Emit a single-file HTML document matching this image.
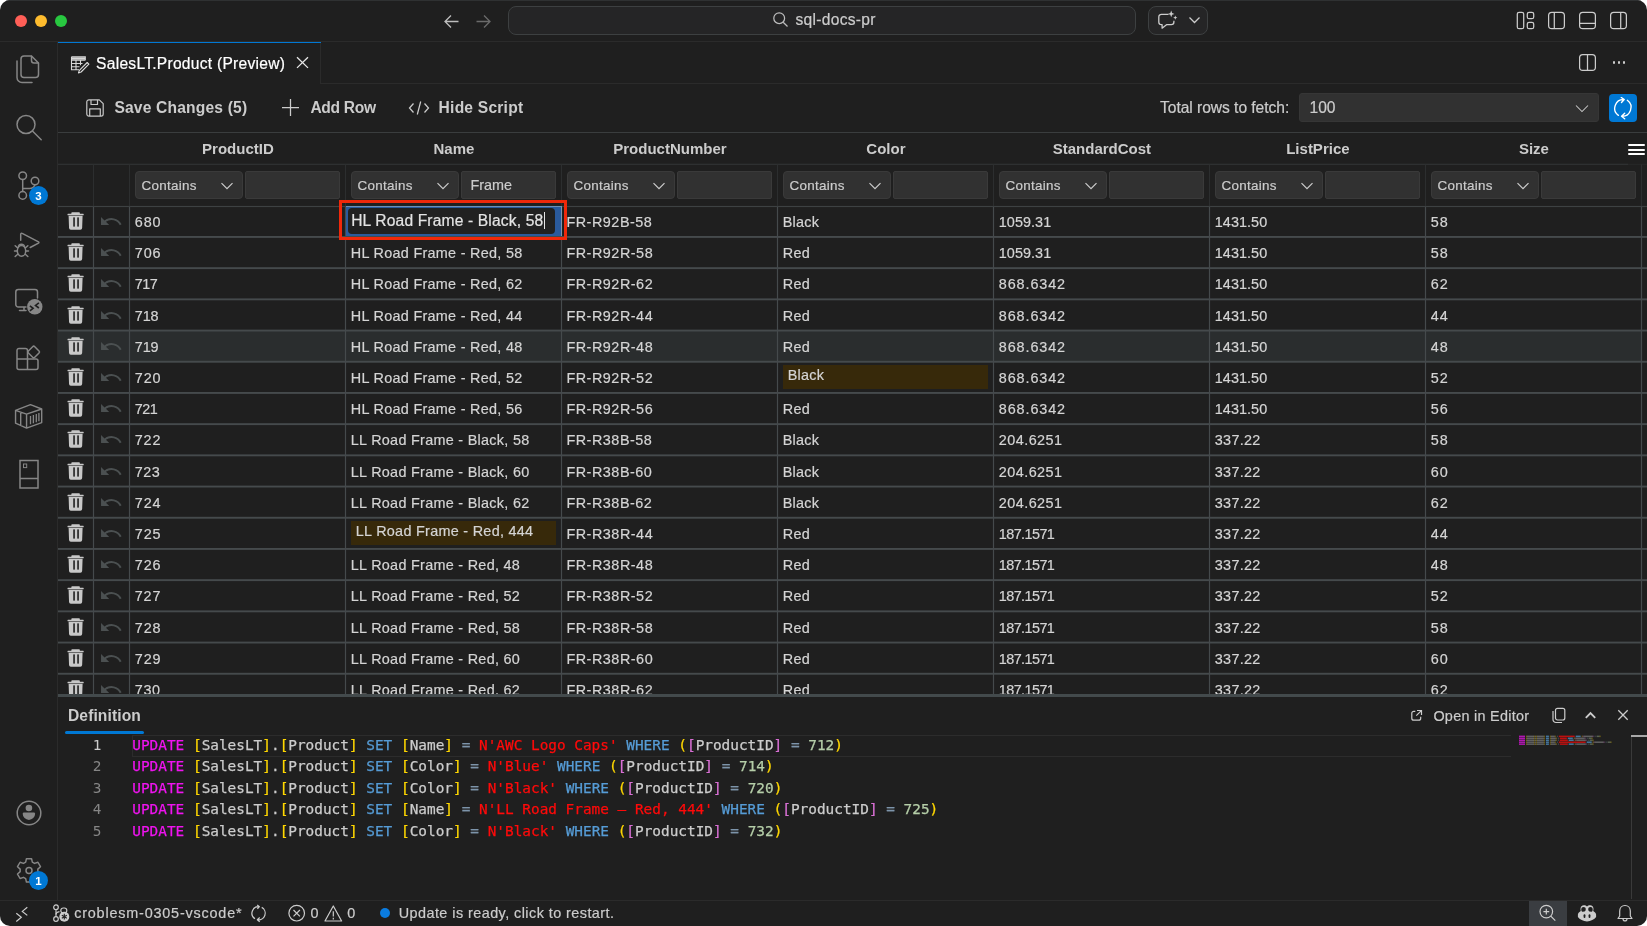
<!DOCTYPE html>
<html lang="en"><head><meta charset="utf-8"><title>SalesLT.Product (Preview) - sql-docs-pr</title>
<style>
html,body{margin:0;padding:0;background:#fff;}
body{width:1647px;height:926px;overflow:hidden;position:relative;}
#win{will-change:transform;position:absolute;left:0;top:0;width:1647px;height:926px;background:#1f1f1f;border-radius:10px;overflow:hidden;}
.b{position:absolute;display:block;box-sizing:border-box;}
.t{position:absolute;white-space:pre;display:block;}
</style></head><body><div id="win">
<div class="b" style="left:0px;top:0px;width:1647px;height:1px;background:#2f3132;"></div>
<div class="b" style="left:0px;top:41px;width:1647px;height:1px;background:#2b2b2b;"></div>
<div class="b" style="left:57px;top:42px;width:1px;height:858px;background:#2b2b2b;"></div>
<div class="b" style="left:0px;top:900px;width:1647px;height:1px;background:#2b2b2b;"></div>
<div class="b" style="left:320px;top:83px;width:1327px;height:1px;background:#2b2b2b;"></div>
<div class="b" style="left:58px;top:42px;width:263px;height:1px;background:#0078d4;"></div>
<div class="b" style="left:320px;top:43px;width:1px;height:41px;background:#2b2b2b;"></div>
<div class="b" style="left:15px;top:15px;width:12px;height:12px;background:#ff5f57;border-radius:50%;"></div>
<div class="b" style="left:35px;top:15px;width:12px;height:12px;background:#febc2e;border-radius:50%;"></div>
<div class="b" style="left:55px;top:15px;width:12px;height:12px;background:#28c840;border-radius:50%;"></div>
<svg class="b" style="left:443px;top:13px;" width="17" height="17" viewBox="0 0 17 17" fill="none"><path d="M15.5 8.5H2.2M8 2.5L2 8.5l6 6" stroke="#bdbdbd" stroke-width="1.3"/></svg>
<svg class="b" style="left:475px;top:13px;" width="17" height="17" viewBox="0 0 17 17" fill="none"><path d="M1.5 8.5h13.3M9 2.5l6 6-6 6" stroke="#6b6b6b" stroke-width="1.3"/></svg>
<div class="b" style="left:508px;top:6px;width:628px;height:29px;background:#252526;border:1px solid #3d4041;border-radius:8px;"></div>
<svg class="b" style="left:772px;top:11px;" width="17" height="17" viewBox="0 0 17 17" fill="none"><circle cx="7.2" cy="7.2" r="5.4" stroke="#bdbdbd" stroke-width="1.25"/><path d="M11.2 11.2l4.3 4.3" stroke="#bdbdbd" stroke-width="1.25"/></svg>
<span class="t" style="left:795.4px;top:12.00px;font:400 15.6px/1 'Liberation Sans', sans-serif;color:#ccc;letter-spacing:0.3px;-webkit-text-stroke:0.2px;">sql-docs-pr</span>
<div class="b" style="left:1148px;top:6px;width:60px;height:29px;background:#252526;border:1px solid #3d4041;border-radius:8px;"></div>
<svg class="b" style="left:1156px;top:9px;" width="23" height="22" viewBox="0 0 23 22" fill="none"><path d="M12.500 5.300H5.400a2.600 2.600 0 0 0-2.600 2.600v5.200a2.600 2.600 0 0 0 2.600 2.600h.7v3.500l4.400-3.500h4.800a2.600 2.600 0 0 0 2.600-2.600v-1.300" stroke="#ccc" stroke-width="1.300" stroke-linejoin="round"/><path d="M15.200 1.600l.9 2.400 2.400.9-2.400.9-.9 2.400-.9-2.400-2.400-.9 2.400-.9z" fill="#ccc"/><path d="M19.300 6.600l.6 1.500 1.500.6-1.500.6-.6 1.500-.6-1.500-1.500-.6 1.500-.6z" fill="#ccc"/></svg>
<svg class="b" style="left:1188px;top:15px;" width="13" height="10" viewBox="0 0 13 10" fill="none"><path d="M1.5 2.5l5 5 5-5" stroke="#ccc" stroke-width="1.25"/></svg>
<svg class="b" style="left:1516px;top:11px;" width="19" height="19" viewBox="0 0 19 19" fill="none"><rect x="1.3" y="1.3" width="6.4" height="16.4" rx="1.8" stroke="#ccc" stroke-width="1.25"/><rect x="11.3" y="1.3" width="6.4" height="6.4" rx="1.8" stroke="#ccc" stroke-width="1.25"/><rect x="11.3" y="11.3" width="6.4" height="6.4" rx="1.8" stroke="#ccc" stroke-width="1.25"/></svg>
<svg class="b" style="left:1547px;top:11px;" width="19" height="19" viewBox="0 0 19 19" fill="none"><rect x="1.6" y="1.3" width="15.8" height="16.4" rx="3.2" stroke="#ccc" stroke-width="1.25"/><path d="M7.3 1.3v16.4" stroke="#ccc" stroke-width="1.25"/></svg>
<svg class="b" style="left:1578px;top:11px;" width="19" height="19" viewBox="0 0 19 19" fill="none"><rect x="1.6" y="1.3" width="15.8" height="16.4" rx="3.2" stroke="#ccc" stroke-width="1.25"/><path d="M1.6 12.3h15.8" stroke="#ccc" stroke-width="1.25"/></svg>
<svg class="b" style="left:1609px;top:11px;" width="19" height="19" viewBox="0 0 19 19" fill="none"><rect x="1.6" y="1.3" width="15.8" height="16.4" rx="3.2" stroke="#ccc" stroke-width="1.25"/><path d="M11.7 1.3v16.4" stroke="#ccc" stroke-width="1.25"/></svg>
<svg class="b" style="left:1578px;top:53px;" width="19" height="19" viewBox="0 0 19 19" fill="none"><rect x="1.6" y="1.6" width="15.8" height="15.8" rx="3.2" stroke="#ccc" stroke-width="1.25"/><path d="M9.5 1.6v15.8" stroke="#ccc" stroke-width="1.25"/></svg>
<div class="b" style="left:1612.8px;top:61.2px;width:2.4px;height:2.4px;background:#ccc;border-radius:50%;"></div>
<div class="b" style="left:1617.8px;top:61.2px;width:2.4px;height:2.4px;background:#ccc;border-radius:50%;"></div>
<div class="b" style="left:1622.8px;top:61.2px;width:2.4px;height:2.4px;background:#ccc;border-radius:50%;"></div>
<svg class="b" style="left:14px;top:53px;" width="30" height="32" viewBox="0 0 30 32" fill="none"><path d="M10 3h7.5l7 7v11.5a3 3 0 0 1-3 3H10a3 3 0 0 1-3-3V6a3 3 0 0 1 3-3z" stroke="#868686" stroke-width="1.5" stroke-linejoin="round" stroke-linecap="round"/><path d="M17.5 3.2v4.3a2.5 2.5 0 0 0 2.5 2.500h4.3" stroke="#868686" stroke-width="1.5" stroke-linejoin="round" stroke-linecap="round"/><path d="M3 8v16.500a5 5 0 0 0 5 5h10" stroke="#868686" stroke-width="1.5" stroke-linejoin="round" stroke-linecap="round"/></svg>
<svg class="b" style="left:14px;top:112px;" width="30" height="30" viewBox="0 0 30 30" fill="none"><circle cx="12" cy="12.5" r="9" stroke="#868686" stroke-width="1.5" stroke-linejoin="round" stroke-linecap="round"/><path d="M18.700 19.200l8.500 8.500" stroke="#868686" stroke-width="1.5" stroke-linejoin="round" stroke-linecap="round"/></svg>
<svg class="b" style="left:14px;top:168px;" width="30" height="32" viewBox="0 0 30 32" fill="none"><circle cx="8.700" cy="7.700" r="3.800" stroke="#868686" stroke-width="1.5" stroke-linejoin="round" stroke-linecap="round"/><circle cx="8.700" cy="27.400" r="3.800" stroke="#868686" stroke-width="1.5" stroke-linejoin="round" stroke-linecap="round"/><circle cx="21" cy="13" r="3.800" stroke="#868686" stroke-width="1.5" stroke-linejoin="round" stroke-linecap="round"/><path d="M8.700 11.500v12.100M8.700 20.500h6.300a6 6 0 0 0 6-3.700" stroke="#868686" stroke-width="1.5" stroke-linejoin="round" stroke-linecap="round"/></svg>
<div class="b" style="left:29px;top:186px;width:19px;height:19px;background:#0078d4;border-radius:50%;"></div>
<span class="t" style="left:38.5px;top:191.00px;font:700 11.5px/1 'Liberation Sans', sans-serif;color:#fff;transform:translateX(-50%);">3</span>
<svg class="b" style="left:12px;top:228px;" width="30" height="31" viewBox="0 0 30 31" fill="none"><path d="M8.700 12.300V6.200a1 1 0 0 1 1.500-.9l16.300 8.500a.8.800 0 0 1 0 1.400l-8.300 4.300" stroke="#868686" stroke-width="1.5" stroke-linejoin="round" stroke-linecap="round"/><ellipse cx="9.500" cy="22.900" rx="4.200" ry="5.300" stroke="#868686" stroke-width="1.5" stroke-linejoin="round" stroke-linecap="round"/><path d="M6.400 19.300a3.100 3.100 0 0 1 6.200 0M5.300 23H2.500M16.500 23h-2.800M5.700 20l-2.500-2.200M13.300 20l2.500-2.200M5.700 26.200l-2.500 2.300M13.300 26.200l2.500 2.300" stroke="#868686" stroke-width="1.5" stroke-linejoin="round" stroke-linecap="round"/></svg>
<svg class="b" style="left:12px;top:286px;" width="34" height="32" viewBox="0 0 34 32" fill="none"><path d="M25.500 12V6a2.500 2.500 0 0 0-2.500-2.500H6.300A2.500 2.500 0 0 0 3.800 6v12.500A2.500 2.500 0 0 0 6.300 21H14M12 21v3.500M7.500 24.500h6.500" stroke="#868686" stroke-width="1.5" stroke-linejoin="round" stroke-linecap="round"/><circle cx="22.800" cy="20.800" r="7.700" fill="#868686"/><path d="M17.900 19.900l3.200 2.400-3.200 2.500M26.900 16.800l-3.400 2.600 3.400 2.600" stroke="#1f1f1f" stroke-width="1.600"/></svg>
<svg class="b" style="left:14px;top:343px;" width="30" height="32" viewBox="0 0 30 32" fill="none"><path d="M3 7.500a2 2 0 0 1 2-2h6.500a2 2 0 0 1 2 2V16H3zM3 16h10.500v10.500H5a2 2 0 0 1-2-2zM13.500 16H22a2 2 0 0 1 2 2v6.500a2 2 0 0 1-2 2h-8.500z" stroke="#868686" stroke-width="1.5" stroke-linejoin="round" stroke-linecap="round"/><rect x="15.200" y="4.500" width="9" height="9" rx="1.500" transform="rotate(45 19.700 9)" stroke="#868686" stroke-width="1.5" stroke-linejoin="round" stroke-linecap="round"/></svg>
<svg class="b" style="left:13px;top:402px;" width="32" height="29" viewBox="0 0 32 29" fill="none"><path d="M17.450 2.700L28.700 7v13.600L13.560 26.150 2.550 21.200V8.300zM2.550 8.300l11.010 3.900L28.700 7M13.560 12.200v13.950M7.700 10.300v13.200" stroke="#868686" stroke-width="1.400" stroke-linejoin="round"/><path d="M17.500 13.900v8.300M20.400 12.900v8.300M23.300 11.900v8.300M25.900 11v8.300" stroke="#868686" stroke-width="1.300"/></svg>
<svg class="b" style="left:17px;top:458px;" width="24" height="32" viewBox="0 0 24 32" fill="none"><path d="M3 2.500h18v27.500H3zM3 20.500h18" stroke="#868686" stroke-width="1.500"/><rect x="6.500" y="6" width="3.200" height="3.600" stroke="#868686" stroke-width="1"/></svg>
<svg class="b" style="left:14px;top:798px;" width="30" height="30" viewBox="0 0 30 30" fill="none"><circle cx="15" cy="15" r="11.800" stroke="#868686" stroke-width="1.5" stroke-linejoin="round" stroke-linecap="round"/><circle cx="14.900" cy="10" r="3.300" fill="#868686"/><path d="M10 14.400h9.800a1.300 1.300 0 0 1 1.300 1.300a6.200 6.200 0 0 1-12.400 0a1.300 1.300 0 0 1 1.300-1.300z" fill="#868686"/></svg>
<svg class="b" style="left:14px;top:855px;" width="30" height="30" viewBox="0 0 30 30" fill="none"><path d="M12.300 3.200h5.400l.8 3.700 2.300 1.300 3.600-1.200 2.700 4.700-2.800 2.500v2.700l2.800 2.500-2.700 4.700-3.600-1.200-2.300 1.300-.8 3.700h-5.400l-.8-3.700-2.300-1.300-3.600 1.200-2.700-4.700 2.800-2.500v-2.700L2.900 11.700l2.700-4.700 3.600 1.200 2.300-1.300z" stroke="#868686" stroke-width="1.550" stroke-linejoin="round" transform="translate(.75 .6) scale(.95)"/><circle cx="15" cy="15.400" r="3" stroke="#868686" stroke-width="1.500"/></svg>
<div class="b" style="left:29px;top:871px;width:19px;height:19px;background:#0078d4;border-radius:50%;"></div>
<span class="t" style="left:38.5px;top:876.00px;font:700 11.5px/1 'Liberation Sans', sans-serif;color:#fff;transform:translateX(-50%);">1</span>
<svg class="b" style="left:70px;top:55px;" width="21" height="20" viewBox="0 0 21 20" fill="none"><path d="M1.500 1.800h13.800v3.400M1.500 1.800v13h7.500M1.500 5.200h13.800M1.500 8.500h11M1.500 11.700h8M6 5.200v9.600M10.500 5.200v5" stroke="#d8d8d8" stroke-width="1.1"/><path d="M2 3.500h13" stroke="#d8d8d8" stroke-width="2.400"/><path d="M17.200 7.500l1.700 1.700-7.800 7.800-2.600.9.900-2.600z" stroke="#d8d8d8" stroke-width="1.1" stroke-linejoin="round"/></svg>
<span class="t" style="left:96.1px;top:56.00px;font:400 15.6px/1 'Liberation Sans', sans-serif;color:#fff;letter-spacing:0.26px;-webkit-text-stroke:0.2px;">SalesLT.Product (Preview)</span>
<svg class="b" style="left:295.3px;top:56px;" width="15" height="14" viewBox="0 0 15 14" fill="none"><path d="M2 1.200l11 10.700M13 1.200L2 11.900" stroke="#e6e6e6" stroke-width="1.300"/></svg>
<div class="b" style="left:58px;top:132px;width:1589px;height:1px;background:#3a3d3e;"></div>
<svg class="b" style="left:85px;top:98px;" width="20" height="20" viewBox="0 0 20 20" fill="none"><path d="M4 1.800h10.300l3.900 3.900V16a2.200 2.200 0 0 1-2.200 2.200H4A2.200 2.200 0 0 1 1.800 16V4A2.200 2.200 0 0 1 4 1.800z" stroke="#c8c8c8" stroke-width="1.2" stroke-linejoin="round"/><path d="M6 2v4.500h6.500V2M4.700 18v-7.200h10.600V18" stroke="#c8c8c8" stroke-width="1.2" stroke-linejoin="round"/></svg>
<span class="t" style="left:114.4px;top:100.00px;font:700 15.6px/1 'Liberation Sans', sans-serif;color:#ccc;letter-spacing:0.18px;">Save Changes (5)</span>
<svg class="b" style="left:281px;top:98px;" width="19" height="19" viewBox="0 0 19 19" fill="none"><path d="M9.500 1v17M1 9.500h17" stroke="#ccc" stroke-width="1.250"/></svg>
<span class="t" style="left:310.4px;top:100.00px;font:700 15.6px/1 'Liberation Sans', sans-serif;color:#ccc;letter-spacing:-0.3px;">Add Row</span>
<svg class="b" style="left:408px;top:99px;" width="22" height="18" viewBox="0 0 22 18" fill="none"><path d="M5.500 4.500L1.500 9l4 4.500M16.500 4.500l4 4.500-4 4.500M12.700 2.500L9.300 15.500" stroke="#ccc" stroke-width="1.250"/></svg>
<span class="t" style="left:438.6px;top:100.00px;font:700 15.6px/1 'Liberation Sans', sans-serif;color:#ccc;letter-spacing:0.22px;">Hide Script</span>
<span class="t" style="left:1160px;top:100.00px;font:400 15.6px/1 'Liberation Sans', sans-serif;color:#ccc;letter-spacing:-0.04px;-webkit-text-stroke:0.2px;">Total rows to fetch:</span>
<div class="b" style="left:1299px;top:93px;width:300px;height:29px;background:#313131;border:1px solid #363636;border-radius:3px;"></div>
<span class="t" style="left:1309.5px;top:100.00px;font:400 15.6px/1 'Liberation Sans', sans-serif;color:#ccc;-webkit-text-stroke:0.2px;">100</span>
<svg class="b" style="left:1573.7px;top:102.6px;" width="16" height="11" viewBox="0 0 16 11" fill="none"><path d="M2 2.500l6 6 6-6" stroke="#c8c8c8" stroke-width="1.050"/></svg>
<div class="b" style="left:1609px;top:94px;width:28px;height:28px;background:#0078d4;border-radius:4px;"></div>
<svg class="b" style="left:1612px;top:97px;" width="22" height="23" viewBox="0 0 22 23" fill="none"><path d="M6.400 18.400A8.800 8.800 0 0 1 12.200 2.500M9.300.500l2.900 2-2.700 3" stroke="#fff" stroke-width="1.350" stroke-linejoin="round" stroke-linecap="round"/><path d="M15.350 3.300A8.800 8.800 0 0 1 9.500 19.200M12.700 16.300l-3.200 2.900 3.200 2.600" stroke="#fff" stroke-width="1.350" stroke-linejoin="round" stroke-linecap="round"/></svg>
<div class="b" id="grid" style="left:58px;top:133px;width:1589px;height:561.0px;overflow:hidden;">
<div class="b" style="left:0;top:198.0px;width:1584px;height:31.2px;background:#2a2d2e;"></div>
<span class="t" style="left:179.9px;top:8px;font:700 15.0px/1 'Liberation Sans', sans-serif;color:#ccc;transform:translateX(-50%);">ProductID</span>
<span class="t" style="left:395.9px;top:8px;font:700 15.0px/1 'Liberation Sans', sans-serif;color:#ccc;transform:translateX(-50%);">Name</span>
<span class="t" style="left:611.9px;top:8px;font:700 15.0px/1 'Liberation Sans', sans-serif;color:#ccc;transform:translateX(-50%);">ProductNumber</span>
<span class="t" style="left:827.9px;top:8px;font:700 15.0px/1 'Liberation Sans', sans-serif;color:#ccc;transform:translateX(-50%);">Color</span>
<span class="t" style="left:1043.9px;top:8px;font:700 15.0px/1 'Liberation Sans', sans-serif;color:#ccc;transform:translateX(-50%);">StandardCost</span>
<span class="t" style="left:1259.9px;top:8px;font:700 15.0px/1 'Liberation Sans', sans-serif;color:#ccc;transform:translateX(-50%);">ListPrice</span>
<span class="t" style="left:1475.9px;top:8px;font:700 15.0px/1 'Liberation Sans', sans-serif;color:#ccc;transform:translateX(-50%);">Size</span>
<div class="b" style="left:77px;top:38px;width:108px;height:28px;background:#313131;border:1px solid #3a3a3a;border-radius:4px;"></div>
<span class="t" style="left:83.6px;top:46px;font:400 13.4px/1 'Liberation Sans', sans-serif;color:#ccc;letter-spacing:0.27px;-webkit-text-stroke:0.2px;">Contains</span>
<svg class="b" style="left:162px;top:48px" width="14" height="10" viewBox="0 0 14 10" fill="none"><path d="M1.500 2.200l5.500 5.500 5.500-5.500" stroke="#ccc" stroke-width="1.200"/></svg>
<div class="b" style="left:187px;top:38px;width:95px;height:28px;background:#313131;border:1px solid #3a3a3a;border-radius:2px;"></div>
<div class="b" style="left:293px;top:38px;width:108px;height:28px;background:#313131;border:1px solid #3a3a3a;border-radius:4px;"></div>
<span class="t" style="left:299.6px;top:46px;font:400 13.4px/1 'Liberation Sans', sans-serif;color:#ccc;letter-spacing:0.27px;-webkit-text-stroke:0.2px;">Contains</span>
<svg class="b" style="left:378px;top:48px" width="14" height="10" viewBox="0 0 14 10" fill="none"><path d="M1.500 2.200l5.500 5.500 5.500-5.500" stroke="#ccc" stroke-width="1.200"/></svg>
<div class="b" style="left:403px;top:38px;width:95px;height:28px;background:#313131;border:1px solid #3a3a3a;border-radius:2px;"></div>
<div class="b" style="left:509px;top:38px;width:108px;height:28px;background:#313131;border:1px solid #3a3a3a;border-radius:4px;"></div>
<span class="t" style="left:515.6px;top:46px;font:400 13.4px/1 'Liberation Sans', sans-serif;color:#ccc;letter-spacing:0.27px;-webkit-text-stroke:0.2px;">Contains</span>
<svg class="b" style="left:594px;top:48px" width="14" height="10" viewBox="0 0 14 10" fill="none"><path d="M1.500 2.200l5.500 5.500 5.500-5.500" stroke="#ccc" stroke-width="1.200"/></svg>
<div class="b" style="left:619px;top:38px;width:95px;height:28px;background:#313131;border:1px solid #3a3a3a;border-radius:2px;"></div>
<div class="b" style="left:725px;top:38px;width:108px;height:28px;background:#313131;border:1px solid #3a3a3a;border-radius:4px;"></div>
<span class="t" style="left:731.6px;top:46px;font:400 13.4px/1 'Liberation Sans', sans-serif;color:#ccc;letter-spacing:0.27px;-webkit-text-stroke:0.2px;">Contains</span>
<svg class="b" style="left:810px;top:48px" width="14" height="10" viewBox="0 0 14 10" fill="none"><path d="M1.500 2.200l5.500 5.500 5.500-5.500" stroke="#ccc" stroke-width="1.200"/></svg>
<div class="b" style="left:835px;top:38px;width:95px;height:28px;background:#313131;border:1px solid #3a3a3a;border-radius:2px;"></div>
<div class="b" style="left:941px;top:38px;width:108px;height:28px;background:#313131;border:1px solid #3a3a3a;border-radius:4px;"></div>
<span class="t" style="left:947.6px;top:46px;font:400 13.4px/1 'Liberation Sans', sans-serif;color:#ccc;letter-spacing:0.27px;-webkit-text-stroke:0.2px;">Contains</span>
<svg class="b" style="left:1026px;top:48px" width="14" height="10" viewBox="0 0 14 10" fill="none"><path d="M1.500 2.200l5.500 5.500 5.500-5.500" stroke="#ccc" stroke-width="1.200"/></svg>
<div class="b" style="left:1051px;top:38px;width:95px;height:28px;background:#313131;border:1px solid #3a3a3a;border-radius:2px;"></div>
<div class="b" style="left:1157px;top:38px;width:108px;height:28px;background:#313131;border:1px solid #3a3a3a;border-radius:4px;"></div>
<span class="t" style="left:1163.6px;top:46px;font:400 13.4px/1 'Liberation Sans', sans-serif;color:#ccc;letter-spacing:0.27px;-webkit-text-stroke:0.2px;">Contains</span>
<svg class="b" style="left:1242px;top:48px" width="14" height="10" viewBox="0 0 14 10" fill="none"><path d="M1.500 2.200l5.500 5.500 5.500-5.500" stroke="#ccc" stroke-width="1.200"/></svg>
<div class="b" style="left:1267px;top:38px;width:95px;height:28px;background:#313131;border:1px solid #3a3a3a;border-radius:2px;"></div>
<div class="b" style="left:1373px;top:38px;width:108px;height:28px;background:#313131;border:1px solid #3a3a3a;border-radius:4px;"></div>
<span class="t" style="left:1379.6px;top:46px;font:400 13.4px/1 'Liberation Sans', sans-serif;color:#ccc;letter-spacing:0.27px;-webkit-text-stroke:0.2px;">Contains</span>
<svg class="b" style="left:1458px;top:48px" width="14" height="10" viewBox="0 0 14 10" fill="none"><path d="M1.500 2.200l5.500 5.500 5.500-5.500" stroke="#ccc" stroke-width="1.200"/></svg>
<div class="b" style="left:1483px;top:38px;width:95px;height:28px;background:#313131;border:1px solid #3a3a3a;border-radius:2px;"></div>
<span class="t" style="left:412.4px;top:45px;font:400 14.4px/1 'Liberation Sans', sans-serif;color:#ccc;-webkit-text-stroke:0.2px;">Frame</span>
<svg class="b" style="left:0;top:0" width="1589" height="561.0" viewBox="0 0 1589 561.0"><rect x="0" y="30.7" width="1570" height="1.200" fill="#303233"/><rect x="1570" y="30.7" width="19" height="1.200" fill="#262727"/><rect x="0" y="72.9" width="1589" height="1.200" fill="#3d4142"/><rect x="0" y="103.0" width="1589" height="1.900" fill="#454a4c"/><rect x="0" y="134.2" width="1589" height="1.900" fill="#454a4c"/><rect x="0" y="165.4" width="1589" height="1.900" fill="#454a4c"/><rect x="0" y="196.6" width="1589" height="1.900" fill="#454a4c"/><rect x="0" y="227.8" width="1589" height="1.900" fill="#454a4c"/><rect x="0" y="259.0" width="1589" height="1.900" fill="#454a4c"/><rect x="0" y="290.2" width="1589" height="1.900" fill="#454a4c"/><rect x="0" y="321.4" width="1589" height="1.900" fill="#454a4c"/><rect x="0" y="352.6" width="1589" height="1.900" fill="#454a4c"/><rect x="0" y="383.8" width="1589" height="1.900" fill="#454a4c"/><rect x="0" y="415.0" width="1589" height="1.900" fill="#454a4c"/><rect x="0" y="446.2" width="1589" height="1.900" fill="#454a4c"/><rect x="0" y="477.4" width="1589" height="1.900" fill="#454a4c"/><rect x="0" y="508.6" width="1589" height="1.900" fill="#454a4c"/><rect x="0" y="539.8" width="1589" height="1.900" fill="#454a4c"/><rect x="0" y="571.0" width="1589" height="1.900" fill="#454a4c"/><rect x="34.9" y="31.5" width="1.200" height="42" fill="#2c2e2f"/><rect x="34.9" y="73.5" width="1.200" height="500" fill="#454a4c"/><rect x="70.9" y="31.5" width="1.200" height="42" fill="#2c2e2f"/><rect x="70.9" y="73.5" width="1.200" height="500" fill="#454a4c"/><rect x="286.9" y="31.5" width="1.200" height="42" fill="#2c2e2f"/><rect x="286.9" y="73.5" width="1.200" height="500" fill="#454a4c"/><rect x="502.9" y="31.5" width="1.200" height="42" fill="#2c2e2f"/><rect x="502.9" y="73.5" width="1.200" height="500" fill="#454a4c"/><rect x="718.9" y="31.5" width="1.200" height="42" fill="#2c2e2f"/><rect x="718.9" y="73.5" width="1.200" height="500" fill="#454a4c"/><rect x="934.9" y="31.5" width="1.200" height="42" fill="#2c2e2f"/><rect x="934.9" y="73.5" width="1.200" height="500" fill="#454a4c"/><rect x="1150.9" y="31.5" width="1.200" height="42" fill="#2c2e2f"/><rect x="1150.9" y="73.5" width="1.200" height="500" fill="#454a4c"/><rect x="1366.9" y="31.5" width="1.200" height="42" fill="#2c2e2f"/><rect x="1366.9" y="73.5" width="1.200" height="500" fill="#454a4c"/><rect x="1582.9" y="31.5" width="1.200" height="42" fill="#2c2e2f"/><rect x="1582.9" y="73.5" width="1.200" height="500" fill="#454a4c"/></svg>
<div class="b" style="left:1570px;top:11.4px;width:17px;height:2px;background:#fff;border-radius:1px;"></div>
<div class="b" style="left:1570px;top:15.8px;width:17px;height:2px;background:#fff;border-radius:1px;"></div>
<div class="b" style="left:1570px;top:20.2px;width:17px;height:2px;background:#fff;border-radius:1px;"></div>
<svg class="b" style="left:9px;top:79.0px" width="17" height="19" viewBox="0 0 17 19"><rect x=".5" y="1.800" width="16.200" height="1.500" rx=".5" fill="#c8c8c8"/><rect x="4.300" y=".300" width="8.600" height="2.200" rx=".9" fill="#c8c8c8"/><path d="M1.600 3.700h14l-.45 12.300a1.800 1.800 0 0 1-1.800 1.700H3.850a1.800 1.800 0 0 1-1.800-1.700z" fill="#c8c8c8"/><rect x="6.250" y="5.400" width="1.600" height="9.200" fill="#1f1f1f"/><rect x="10.250" y="5.400" width="1.600" height="9.200" fill="#1f1f1f"/></svg>
<svg class="b" style="left:42.2px;top:82.9px" width="22.600" height="10" viewBox="0 0 22 10" preserveAspectRatio="none"><path d="M1 1v8h8L5.800 5.800A9 9 0 0 1 19.300 9.200l1.700-.9A11 11 0 0 0 4.400 4.400z" fill="#4b5051"/></svg>
<span class="t" style="left:76.8px;top:82px;font:400 14.4px/1 'Liberation Sans', sans-serif;color:#d4d4d4;letter-spacing:0.9px;-webkit-text-stroke:0.2px;">680</span>
<span class="t" style="left:508.4px;top:82px;font:400 14.4px/1 'Liberation Sans', sans-serif;color:#d4d4d4;letter-spacing:0.52px;-webkit-text-stroke:0.2px;">FR-R92B-58</span>
<span class="t" style="left:724.8px;top:82px;font:400 14.4px/1 'Liberation Sans', sans-serif;color:#d4d4d4;letter-spacing:0.22px;-webkit-text-stroke:0.2px;">Black</span>
<span class="t" style="left:940.8px;top:82px;font:400 14.4px/1 'Liberation Sans', sans-serif;color:#d4d4d4;letter-spacing:0.06px;-webkit-text-stroke:0.2px;">1059.31</span>
<span class="t" style="left:1156.8px;top:82px;font:400 14.4px/1 'Liberation Sans', sans-serif;color:#d4d4d4;letter-spacing:0.06px;-webkit-text-stroke:0.2px;">1431.50</span>
<span class="t" style="left:1372.8px;top:82px;font:400 14.4px/1 'Liberation Sans', sans-serif;color:#d4d4d4;letter-spacing:0.9px;-webkit-text-stroke:0.2px;">58</span>
<svg class="b" style="left:9px;top:110.2px" width="17" height="19" viewBox="0 0 17 19"><rect x=".5" y="1.800" width="16.200" height="1.500" rx=".5" fill="#c8c8c8"/><rect x="4.300" y=".300" width="8.600" height="2.200" rx=".9" fill="#c8c8c8"/><path d="M1.600 3.700h14l-.45 12.300a1.800 1.800 0 0 1-1.800 1.700H3.850a1.800 1.800 0 0 1-1.800-1.700z" fill="#c8c8c8"/><rect x="6.250" y="5.400" width="1.600" height="9.200" fill="#1f1f1f"/><rect x="10.250" y="5.400" width="1.600" height="9.200" fill="#1f1f1f"/></svg>
<svg class="b" style="left:42.2px;top:114.1px" width="22.600" height="10" viewBox="0 0 22 10" preserveAspectRatio="none"><path d="M1 1v8h8L5.800 5.800A9 9 0 0 1 19.300 9.200l1.700-.9A11 11 0 0 0 4.400 4.400z" fill="#4b5051"/></svg>
<span class="t" style="left:76.8px;top:113px;font:400 14.4px/1 'Liberation Sans', sans-serif;color:#d4d4d4;letter-spacing:0.9px;-webkit-text-stroke:0.2px;">706</span>
<span class="t" style="left:292.8px;top:113px;font:400 14.4px/1 'Liberation Sans', sans-serif;color:#d4d4d4;letter-spacing:0.29px;-webkit-text-stroke:0.2px;">HL Road Frame - Red, 58</span>
<span class="t" style="left:508.4px;top:113px;font:400 14.4px/1 'Liberation Sans', sans-serif;color:#d4d4d4;letter-spacing:0.52px;-webkit-text-stroke:0.2px;">FR-R92R-58</span>
<span class="t" style="left:724.8px;top:113px;font:400 14.4px/1 'Liberation Sans', sans-serif;color:#d4d4d4;letter-spacing:0.22px;-webkit-text-stroke:0.2px;">Red</span>
<span class="t" style="left:940.8px;top:113px;font:400 14.4px/1 'Liberation Sans', sans-serif;color:#d4d4d4;letter-spacing:0.06px;-webkit-text-stroke:0.2px;">1059.31</span>
<span class="t" style="left:1156.8px;top:113px;font:400 14.4px/1 'Liberation Sans', sans-serif;color:#d4d4d4;letter-spacing:0.06px;-webkit-text-stroke:0.2px;">1431.50</span>
<span class="t" style="left:1372.8px;top:113px;font:400 14.4px/1 'Liberation Sans', sans-serif;color:#d4d4d4;letter-spacing:0.9px;-webkit-text-stroke:0.2px;">58</span>
<svg class="b" style="left:9px;top:141.4px" width="17" height="19" viewBox="0 0 17 19"><rect x=".5" y="1.800" width="16.200" height="1.500" rx=".5" fill="#c8c8c8"/><rect x="4.300" y=".300" width="8.600" height="2.200" rx=".9" fill="#c8c8c8"/><path d="M1.600 3.700h14l-.45 12.300a1.800 1.800 0 0 1-1.800 1.700H3.850a1.800 1.800 0 0 1-1.800-1.700z" fill="#c8c8c8"/><rect x="6.250" y="5.400" width="1.600" height="9.200" fill="#1f1f1f"/><rect x="10.250" y="5.400" width="1.600" height="9.200" fill="#1f1f1f"/></svg>
<svg class="b" style="left:42.2px;top:145.3px" width="22.600" height="10" viewBox="0 0 22 10" preserveAspectRatio="none"><path d="M1 1v8h8L5.800 5.800A9 9 0 0 1 19.300 9.200l1.700-.9A11 11 0 0 0 4.400 4.400z" fill="#4b5051"/></svg>
<span class="t" style="left:76.8px;top:144px;font:400 14.4px/1 'Liberation Sans', sans-serif;color:#d4d4d4;letter-spacing:-0.56px;-webkit-text-stroke:0.2px;">717</span>
<span class="t" style="left:292.8px;top:144px;font:400 14.4px/1 'Liberation Sans', sans-serif;color:#d4d4d4;letter-spacing:0.29px;-webkit-text-stroke:0.2px;">HL Road Frame - Red, 62</span>
<span class="t" style="left:508.4px;top:144px;font:400 14.4px/1 'Liberation Sans', sans-serif;color:#d4d4d4;letter-spacing:0.52px;-webkit-text-stroke:0.2px;">FR-R92R-62</span>
<span class="t" style="left:724.8px;top:144px;font:400 14.4px/1 'Liberation Sans', sans-serif;color:#d4d4d4;letter-spacing:0.22px;-webkit-text-stroke:0.2px;">Red</span>
<span class="t" style="left:940.8px;top:144px;font:400 14.4px/1 'Liberation Sans', sans-serif;color:#d4d4d4;letter-spacing:0.9px;-webkit-text-stroke:0.2px;">868.6342</span>
<span class="t" style="left:1156.8px;top:144px;font:400 14.4px/1 'Liberation Sans', sans-serif;color:#d4d4d4;letter-spacing:0.06px;-webkit-text-stroke:0.2px;">1431.50</span>
<span class="t" style="left:1372.8px;top:144px;font:400 14.4px/1 'Liberation Sans', sans-serif;color:#d4d4d4;letter-spacing:0.9px;-webkit-text-stroke:0.2px;">62</span>
<svg class="b" style="left:9px;top:172.6px" width="17" height="19" viewBox="0 0 17 19"><rect x=".5" y="1.800" width="16.200" height="1.500" rx=".5" fill="#c8c8c8"/><rect x="4.300" y=".300" width="8.600" height="2.200" rx=".9" fill="#c8c8c8"/><path d="M1.600 3.700h14l-.45 12.300a1.800 1.800 0 0 1-1.800 1.700H3.850a1.800 1.800 0 0 1-1.800-1.700z" fill="#c8c8c8"/><rect x="6.250" y="5.400" width="1.600" height="9.200" fill="#1f1f1f"/><rect x="10.250" y="5.400" width="1.600" height="9.200" fill="#1f1f1f"/></svg>
<svg class="b" style="left:42.2px;top:176.5px" width="22.600" height="10" viewBox="0 0 22 10" preserveAspectRatio="none"><path d="M1 1v8h8L5.800 5.800A9 9 0 0 1 19.300 9.200l1.700-.9A11 11 0 0 0 4.400 4.400z" fill="#4b5051"/></svg>
<span class="t" style="left:76.8px;top:176px;font:400 14.4px/1 'Liberation Sans', sans-serif;color:#d4d4d4;letter-spacing:-0.16px;-webkit-text-stroke:0.2px;">718</span>
<span class="t" style="left:292.8px;top:176px;font:400 14.4px/1 'Liberation Sans', sans-serif;color:#d4d4d4;letter-spacing:0.29px;-webkit-text-stroke:0.2px;">HL Road Frame - Red, 44</span>
<span class="t" style="left:508.4px;top:176px;font:400 14.4px/1 'Liberation Sans', sans-serif;color:#d4d4d4;letter-spacing:0.52px;-webkit-text-stroke:0.2px;">FR-R92R-44</span>
<span class="t" style="left:724.8px;top:176px;font:400 14.4px/1 'Liberation Sans', sans-serif;color:#d4d4d4;letter-spacing:0.22px;-webkit-text-stroke:0.2px;">Red</span>
<span class="t" style="left:940.8px;top:176px;font:400 14.4px/1 'Liberation Sans', sans-serif;color:#d4d4d4;letter-spacing:0.9px;-webkit-text-stroke:0.2px;">868.6342</span>
<span class="t" style="left:1156.8px;top:176px;font:400 14.4px/1 'Liberation Sans', sans-serif;color:#d4d4d4;letter-spacing:0.06px;-webkit-text-stroke:0.2px;">1431.50</span>
<span class="t" style="left:1372.8px;top:176px;font:400 14.4px/1 'Liberation Sans', sans-serif;color:#d4d4d4;letter-spacing:0.9px;-webkit-text-stroke:0.2px;">44</span>
<svg class="b" style="left:9px;top:203.8px" width="17" height="19" viewBox="0 0 17 19"><rect x=".5" y="1.800" width="16.200" height="1.500" rx=".5" fill="#c8c8c8"/><rect x="4.300" y=".300" width="8.600" height="2.200" rx=".9" fill="#c8c8c8"/><path d="M1.600 3.700h14l-.45 12.300a1.800 1.800 0 0 1-1.800 1.700H3.850a1.800 1.800 0 0 1-1.800-1.700z" fill="#c8c8c8"/><rect x="6.250" y="5.400" width="1.600" height="9.200" fill="#1f1f1f"/><rect x="10.250" y="5.400" width="1.600" height="9.200" fill="#1f1f1f"/></svg>
<svg class="b" style="left:42.2px;top:207.7px" width="22.600" height="10" viewBox="0 0 22 10" preserveAspectRatio="none"><path d="M1 1v8h8L5.800 5.800A9 9 0 0 1 19.300 9.200l1.700-.9A11 11 0 0 0 4.400 4.400z" fill="#4b5051"/></svg>
<span class="t" style="left:76.8px;top:207px;font:400 14.4px/1 'Liberation Sans', sans-serif;color:#d4d4d4;letter-spacing:-0.16px;-webkit-text-stroke:0.2px;">719</span>
<span class="t" style="left:292.8px;top:207px;font:400 14.4px/1 'Liberation Sans', sans-serif;color:#d4d4d4;letter-spacing:0.29px;-webkit-text-stroke:0.2px;">HL Road Frame - Red, 48</span>
<span class="t" style="left:508.4px;top:207px;font:400 14.4px/1 'Liberation Sans', sans-serif;color:#d4d4d4;letter-spacing:0.52px;-webkit-text-stroke:0.2px;">FR-R92R-48</span>
<span class="t" style="left:724.8px;top:207px;font:400 14.4px/1 'Liberation Sans', sans-serif;color:#d4d4d4;letter-spacing:0.22px;-webkit-text-stroke:0.2px;">Red</span>
<span class="t" style="left:940.8px;top:207px;font:400 14.4px/1 'Liberation Sans', sans-serif;color:#d4d4d4;letter-spacing:0.9px;-webkit-text-stroke:0.2px;">868.6342</span>
<span class="t" style="left:1156.8px;top:207px;font:400 14.4px/1 'Liberation Sans', sans-serif;color:#d4d4d4;letter-spacing:0.06px;-webkit-text-stroke:0.2px;">1431.50</span>
<span class="t" style="left:1372.8px;top:207px;font:400 14.4px/1 'Liberation Sans', sans-serif;color:#d4d4d4;letter-spacing:0.9px;-webkit-text-stroke:0.2px;">48</span>
<svg class="b" style="left:9px;top:235.0px" width="17" height="19" viewBox="0 0 17 19"><rect x=".5" y="1.800" width="16.200" height="1.500" rx=".5" fill="#c8c8c8"/><rect x="4.300" y=".300" width="8.600" height="2.200" rx=".9" fill="#c8c8c8"/><path d="M1.600 3.700h14l-.45 12.300a1.800 1.800 0 0 1-1.800 1.700H3.850a1.800 1.800 0 0 1-1.800-1.700z" fill="#c8c8c8"/><rect x="6.250" y="5.400" width="1.600" height="9.200" fill="#1f1f1f"/><rect x="10.250" y="5.400" width="1.600" height="9.200" fill="#1f1f1f"/></svg>
<svg class="b" style="left:42.2px;top:238.9px" width="22.600" height="10" viewBox="0 0 22 10" preserveAspectRatio="none"><path d="M1 1v8h8L5.800 5.800A9 9 0 0 1 19.300 9.200l1.700-.9A11 11 0 0 0 4.400 4.400z" fill="#4b5051"/></svg>
<span class="t" style="left:76.8px;top:238px;font:400 14.4px/1 'Liberation Sans', sans-serif;color:#d4d4d4;letter-spacing:0.9px;-webkit-text-stroke:0.2px;">720</span>
<span class="t" style="left:292.8px;top:238px;font:400 14.4px/1 'Liberation Sans', sans-serif;color:#d4d4d4;letter-spacing:0.29px;-webkit-text-stroke:0.2px;">HL Road Frame - Red, 52</span>
<span class="t" style="left:508.4px;top:238px;font:400 14.4px/1 'Liberation Sans', sans-serif;color:#d4d4d4;letter-spacing:0.52px;-webkit-text-stroke:0.2px;">FR-R92R-52</span>
<div class="b" style="left:725px;top:232.0px;width:205px;height:23.800px;background:#37290a;"></div>
<span class="t" style="left:729.8px;top:235px;font:400 14.4px/1 'Liberation Sans', sans-serif;color:#d4d4d4;letter-spacing:0.22px;-webkit-text-stroke:0.2px;">Black</span>
<span class="t" style="left:940.8px;top:238px;font:400 14.4px/1 'Liberation Sans', sans-serif;color:#d4d4d4;letter-spacing:0.9px;-webkit-text-stroke:0.2px;">868.6342</span>
<span class="t" style="left:1156.8px;top:238px;font:400 14.4px/1 'Liberation Sans', sans-serif;color:#d4d4d4;letter-spacing:0.06px;-webkit-text-stroke:0.2px;">1431.50</span>
<span class="t" style="left:1372.8px;top:238px;font:400 14.4px/1 'Liberation Sans', sans-serif;color:#d4d4d4;letter-spacing:0.9px;-webkit-text-stroke:0.2px;">52</span>
<svg class="b" style="left:9px;top:266.2px" width="17" height="19" viewBox="0 0 17 19"><rect x=".5" y="1.800" width="16.200" height="1.500" rx=".5" fill="#c8c8c8"/><rect x="4.300" y=".300" width="8.600" height="2.200" rx=".9" fill="#c8c8c8"/><path d="M1.600 3.700h14l-.45 12.300a1.800 1.800 0 0 1-1.800 1.700H3.850a1.800 1.800 0 0 1-1.800-1.700z" fill="#c8c8c8"/><rect x="6.250" y="5.400" width="1.600" height="9.200" fill="#1f1f1f"/><rect x="10.250" y="5.400" width="1.600" height="9.200" fill="#1f1f1f"/></svg>
<svg class="b" style="left:42.2px;top:270.1px" width="22.600" height="10" viewBox="0 0 22 10" preserveAspectRatio="none"><path d="M1 1v8h8L5.800 5.800A9 9 0 0 1 19.300 9.200l1.700-.9A11 11 0 0 0 4.400 4.400z" fill="#4b5051"/></svg>
<span class="t" style="left:76.8px;top:269px;font:400 14.4px/1 'Liberation Sans', sans-serif;color:#d4d4d4;letter-spacing:-0.56px;-webkit-text-stroke:0.2px;">721</span>
<span class="t" style="left:292.8px;top:269px;font:400 14.4px/1 'Liberation Sans', sans-serif;color:#d4d4d4;letter-spacing:0.29px;-webkit-text-stroke:0.2px;">HL Road Frame - Red, 56</span>
<span class="t" style="left:508.4px;top:269px;font:400 14.4px/1 'Liberation Sans', sans-serif;color:#d4d4d4;letter-spacing:0.52px;-webkit-text-stroke:0.2px;">FR-R92R-56</span>
<span class="t" style="left:724.8px;top:269px;font:400 14.4px/1 'Liberation Sans', sans-serif;color:#d4d4d4;letter-spacing:0.22px;-webkit-text-stroke:0.2px;">Red</span>
<span class="t" style="left:940.8px;top:269px;font:400 14.4px/1 'Liberation Sans', sans-serif;color:#d4d4d4;letter-spacing:0.9px;-webkit-text-stroke:0.2px;">868.6342</span>
<span class="t" style="left:1156.8px;top:269px;font:400 14.4px/1 'Liberation Sans', sans-serif;color:#d4d4d4;letter-spacing:0.06px;-webkit-text-stroke:0.2px;">1431.50</span>
<span class="t" style="left:1372.8px;top:269px;font:400 14.4px/1 'Liberation Sans', sans-serif;color:#d4d4d4;letter-spacing:0.9px;-webkit-text-stroke:0.2px;">56</span>
<svg class="b" style="left:9px;top:297.4px" width="17" height="19" viewBox="0 0 17 19"><rect x=".5" y="1.800" width="16.200" height="1.500" rx=".5" fill="#c8c8c8"/><rect x="4.300" y=".300" width="8.600" height="2.200" rx=".9" fill="#c8c8c8"/><path d="M1.600 3.700h14l-.45 12.300a1.800 1.800 0 0 1-1.800 1.700H3.850a1.800 1.800 0 0 1-1.800-1.700z" fill="#c8c8c8"/><rect x="6.250" y="5.400" width="1.600" height="9.200" fill="#1f1f1f"/><rect x="10.250" y="5.400" width="1.600" height="9.200" fill="#1f1f1f"/></svg>
<svg class="b" style="left:42.2px;top:301.3px" width="22.600" height="10" viewBox="0 0 22 10" preserveAspectRatio="none"><path d="M1 1v8h8L5.800 5.800A9 9 0 0 1 19.300 9.200l1.700-.9A11 11 0 0 0 4.400 4.400z" fill="#4b5051"/></svg>
<span class="t" style="left:76.8px;top:300px;font:400 14.4px/1 'Liberation Sans', sans-serif;color:#d4d4d4;letter-spacing:0.79px;-webkit-text-stroke:0.2px;">722</span>
<span class="t" style="left:292.8px;top:300px;font:400 14.4px/1 'Liberation Sans', sans-serif;color:#d4d4d4;letter-spacing:0.29px;-webkit-text-stroke:0.2px;">LL Road Frame - Black, 58</span>
<span class="t" style="left:508.4px;top:300px;font:400 14.4px/1 'Liberation Sans', sans-serif;color:#d4d4d4;letter-spacing:0.52px;-webkit-text-stroke:0.2px;">FR-R38B-58</span>
<span class="t" style="left:724.8px;top:300px;font:400 14.4px/1 'Liberation Sans', sans-serif;color:#d4d4d4;letter-spacing:0.22px;-webkit-text-stroke:0.2px;">Black</span>
<span class="t" style="left:940.8px;top:300px;font:400 14.4px/1 'Liberation Sans', sans-serif;color:#d4d4d4;letter-spacing:0.46px;-webkit-text-stroke:0.2px;">204.6251</span>
<span class="t" style="left:1156.8px;top:300px;font:400 14.4px/1 'Liberation Sans', sans-serif;color:#d4d4d4;letter-spacing:0.29px;-webkit-text-stroke:0.2px;">337.22</span>
<span class="t" style="left:1372.8px;top:300px;font:400 14.4px/1 'Liberation Sans', sans-serif;color:#d4d4d4;letter-spacing:0.9px;-webkit-text-stroke:0.2px;">58</span>
<svg class="b" style="left:9px;top:328.6px" width="17" height="19" viewBox="0 0 17 19"><rect x=".5" y="1.800" width="16.200" height="1.500" rx=".5" fill="#c8c8c8"/><rect x="4.300" y=".300" width="8.600" height="2.200" rx=".9" fill="#c8c8c8"/><path d="M1.600 3.700h14l-.45 12.300a1.800 1.800 0 0 1-1.800 1.700H3.850a1.800 1.800 0 0 1-1.800-1.700z" fill="#c8c8c8"/><rect x="6.250" y="5.400" width="1.600" height="9.200" fill="#1f1f1f"/><rect x="10.250" y="5.400" width="1.600" height="9.200" fill="#1f1f1f"/></svg>
<svg class="b" style="left:42.2px;top:332.5px" width="22.600" height="10" viewBox="0 0 22 10" preserveAspectRatio="none"><path d="M1 1v8h8L5.800 5.800A9 9 0 0 1 19.300 9.200l1.700-.9A11 11 0 0 0 4.400 4.400z" fill="#4b5051"/></svg>
<span class="t" style="left:76.8px;top:332px;font:400 14.4px/1 'Liberation Sans', sans-serif;color:#d4d4d4;letter-spacing:0.49px;-webkit-text-stroke:0.2px;">723</span>
<span class="t" style="left:292.8px;top:332px;font:400 14.4px/1 'Liberation Sans', sans-serif;color:#d4d4d4;letter-spacing:0.29px;-webkit-text-stroke:0.2px;">LL Road Frame - Black, 60</span>
<span class="t" style="left:508.4px;top:332px;font:400 14.4px/1 'Liberation Sans', sans-serif;color:#d4d4d4;letter-spacing:0.52px;-webkit-text-stroke:0.2px;">FR-R38B-60</span>
<span class="t" style="left:724.8px;top:332px;font:400 14.4px/1 'Liberation Sans', sans-serif;color:#d4d4d4;letter-spacing:0.22px;-webkit-text-stroke:0.2px;">Black</span>
<span class="t" style="left:940.8px;top:332px;font:400 14.4px/1 'Liberation Sans', sans-serif;color:#d4d4d4;letter-spacing:0.46px;-webkit-text-stroke:0.2px;">204.6251</span>
<span class="t" style="left:1156.8px;top:332px;font:400 14.4px/1 'Liberation Sans', sans-serif;color:#d4d4d4;letter-spacing:0.29px;-webkit-text-stroke:0.2px;">337.22</span>
<span class="t" style="left:1372.8px;top:332px;font:400 14.4px/1 'Liberation Sans', sans-serif;color:#d4d4d4;letter-spacing:0.9px;-webkit-text-stroke:0.2px;">60</span>
<svg class="b" style="left:9px;top:359.8px" width="17" height="19" viewBox="0 0 17 19"><rect x=".5" y="1.800" width="16.200" height="1.500" rx=".5" fill="#c8c8c8"/><rect x="4.300" y=".300" width="8.600" height="2.200" rx=".9" fill="#c8c8c8"/><path d="M1.600 3.700h14l-.45 12.300a1.800 1.800 0 0 1-1.800 1.700H3.850a1.800 1.800 0 0 1-1.800-1.700z" fill="#c8c8c8"/><rect x="6.250" y="5.400" width="1.600" height="9.200" fill="#1f1f1f"/><rect x="10.250" y="5.400" width="1.600" height="9.200" fill="#1f1f1f"/></svg>
<svg class="b" style="left:42.2px;top:363.7px" width="22.600" height="10" viewBox="0 0 22 10" preserveAspectRatio="none"><path d="M1 1v8h8L5.800 5.800A9 9 0 0 1 19.300 9.200l1.700-.9A11 11 0 0 0 4.400 4.400z" fill="#4b5051"/></svg>
<span class="t" style="left:76.8px;top:363px;font:400 14.4px/1 'Liberation Sans', sans-serif;color:#d4d4d4;letter-spacing:0.9px;-webkit-text-stroke:0.2px;">724</span>
<span class="t" style="left:292.8px;top:363px;font:400 14.4px/1 'Liberation Sans', sans-serif;color:#d4d4d4;letter-spacing:0.29px;-webkit-text-stroke:0.2px;">LL Road Frame - Black, 62</span>
<span class="t" style="left:508.4px;top:363px;font:400 14.4px/1 'Liberation Sans', sans-serif;color:#d4d4d4;letter-spacing:0.52px;-webkit-text-stroke:0.2px;">FR-R38B-62</span>
<span class="t" style="left:724.8px;top:363px;font:400 14.4px/1 'Liberation Sans', sans-serif;color:#d4d4d4;letter-spacing:0.22px;-webkit-text-stroke:0.2px;">Black</span>
<span class="t" style="left:940.8px;top:363px;font:400 14.4px/1 'Liberation Sans', sans-serif;color:#d4d4d4;letter-spacing:0.46px;-webkit-text-stroke:0.2px;">204.6251</span>
<span class="t" style="left:1156.8px;top:363px;font:400 14.4px/1 'Liberation Sans', sans-serif;color:#d4d4d4;letter-spacing:0.29px;-webkit-text-stroke:0.2px;">337.22</span>
<span class="t" style="left:1372.8px;top:363px;font:400 14.4px/1 'Liberation Sans', sans-serif;color:#d4d4d4;letter-spacing:0.9px;-webkit-text-stroke:0.2px;">62</span>
<svg class="b" style="left:9px;top:391.0px" width="17" height="19" viewBox="0 0 17 19"><rect x=".5" y="1.800" width="16.200" height="1.500" rx=".5" fill="#c8c8c8"/><rect x="4.300" y=".300" width="8.600" height="2.200" rx=".9" fill="#c8c8c8"/><path d="M1.600 3.700h14l-.45 12.300a1.800 1.800 0 0 1-1.800 1.700H3.850a1.800 1.800 0 0 1-1.800-1.700z" fill="#c8c8c8"/><rect x="6.250" y="5.400" width="1.600" height="9.200" fill="#1f1f1f"/><rect x="10.250" y="5.400" width="1.600" height="9.200" fill="#1f1f1f"/></svg>
<svg class="b" style="left:42.2px;top:394.9px" width="22.600" height="10" viewBox="0 0 22 10" preserveAspectRatio="none"><path d="M1 1v8h8L5.800 5.800A9 9 0 0 1 19.300 9.200l1.700-.9A11 11 0 0 0 4.400 4.400z" fill="#4b5051"/></svg>
<span class="t" style="left:76.8px;top:394px;font:400 14.4px/1 'Liberation Sans', sans-serif;color:#d4d4d4;letter-spacing:0.9px;-webkit-text-stroke:0.2px;">725</span>
<div class="b" style="left:293px;top:388.0px;width:205px;height:23.800px;background:#37290a;"></div>
<span class="t" style="left:297.8px;top:391px;font:400 14.4px/1 'Liberation Sans', sans-serif;color:#d4d4d4;letter-spacing:0.29px;-webkit-text-stroke:0.2px;">LL Road Frame - Red, 444</span>
<span class="t" style="left:508.4px;top:394px;font:400 14.4px/1 'Liberation Sans', sans-serif;color:#d4d4d4;letter-spacing:0.52px;-webkit-text-stroke:0.2px;">FR-R38R-44</span>
<span class="t" style="left:724.8px;top:394px;font:400 14.4px/1 'Liberation Sans', sans-serif;color:#d4d4d4;letter-spacing:0.22px;-webkit-text-stroke:0.2px;">Red</span>
<span class="t" style="left:940.8px;top:394px;font:400 14.4px/1 'Liberation Sans', sans-serif;color:#d4d4d4;letter-spacing:-0.57px;-webkit-text-stroke:0.2px;">187.1571</span>
<span class="t" style="left:1156.8px;top:394px;font:400 14.4px/1 'Liberation Sans', sans-serif;color:#d4d4d4;letter-spacing:0.29px;-webkit-text-stroke:0.2px;">337.22</span>
<span class="t" style="left:1372.8px;top:394px;font:400 14.4px/1 'Liberation Sans', sans-serif;color:#d4d4d4;letter-spacing:0.9px;-webkit-text-stroke:0.2px;">44</span>
<svg class="b" style="left:9px;top:422.2px" width="17" height="19" viewBox="0 0 17 19"><rect x=".5" y="1.800" width="16.200" height="1.500" rx=".5" fill="#c8c8c8"/><rect x="4.300" y=".300" width="8.600" height="2.200" rx=".9" fill="#c8c8c8"/><path d="M1.600 3.700h14l-.45 12.300a1.800 1.800 0 0 1-1.800 1.700H3.850a1.800 1.800 0 0 1-1.800-1.700z" fill="#c8c8c8"/><rect x="6.250" y="5.400" width="1.600" height="9.200" fill="#1f1f1f"/><rect x="10.250" y="5.400" width="1.600" height="9.200" fill="#1f1f1f"/></svg>
<svg class="b" style="left:42.2px;top:426.1px" width="22.600" height="10" viewBox="0 0 22 10" preserveAspectRatio="none"><path d="M1 1v8h8L5.800 5.800A9 9 0 0 1 19.300 9.200l1.700-.9A11 11 0 0 0 4.400 4.400z" fill="#4b5051"/></svg>
<span class="t" style="left:76.8px;top:425px;font:400 14.4px/1 'Liberation Sans', sans-serif;color:#d4d4d4;letter-spacing:0.9px;-webkit-text-stroke:0.2px;">726</span>
<span class="t" style="left:292.8px;top:425px;font:400 14.4px/1 'Liberation Sans', sans-serif;color:#d4d4d4;letter-spacing:0.29px;-webkit-text-stroke:0.2px;">LL Road Frame - Red, 48</span>
<span class="t" style="left:508.4px;top:425px;font:400 14.4px/1 'Liberation Sans', sans-serif;color:#d4d4d4;letter-spacing:0.52px;-webkit-text-stroke:0.2px;">FR-R38R-48</span>
<span class="t" style="left:724.8px;top:425px;font:400 14.4px/1 'Liberation Sans', sans-serif;color:#d4d4d4;letter-spacing:0.22px;-webkit-text-stroke:0.2px;">Red</span>
<span class="t" style="left:940.8px;top:425px;font:400 14.4px/1 'Liberation Sans', sans-serif;color:#d4d4d4;letter-spacing:-0.57px;-webkit-text-stroke:0.2px;">187.1571</span>
<span class="t" style="left:1156.8px;top:425px;font:400 14.4px/1 'Liberation Sans', sans-serif;color:#d4d4d4;letter-spacing:0.29px;-webkit-text-stroke:0.2px;">337.22</span>
<span class="t" style="left:1372.8px;top:425px;font:400 14.4px/1 'Liberation Sans', sans-serif;color:#d4d4d4;letter-spacing:0.9px;-webkit-text-stroke:0.2px;">48</span>
<svg class="b" style="left:9px;top:453.4px" width="17" height="19" viewBox="0 0 17 19"><rect x=".5" y="1.800" width="16.200" height="1.500" rx=".5" fill="#c8c8c8"/><rect x="4.300" y=".300" width="8.600" height="2.200" rx=".9" fill="#c8c8c8"/><path d="M1.600 3.700h14l-.45 12.300a1.800 1.800 0 0 1-1.800 1.700H3.850a1.800 1.800 0 0 1-1.800-1.700z" fill="#c8c8c8"/><rect x="6.250" y="5.400" width="1.600" height="9.200" fill="#1f1f1f"/><rect x="10.250" y="5.400" width="1.600" height="9.200" fill="#1f1f1f"/></svg>
<svg class="b" style="left:42.2px;top:457.3px" width="22.600" height="10" viewBox="0 0 22 10" preserveAspectRatio="none"><path d="M1 1v8h8L5.800 5.800A9 9 0 0 1 19.300 9.200l1.700-.9A11 11 0 0 0 4.400 4.400z" fill="#4b5051"/></svg>
<span class="t" style="left:76.8px;top:456px;font:400 14.4px/1 'Liberation Sans', sans-serif;color:#d4d4d4;letter-spacing:0.79px;-webkit-text-stroke:0.2px;">727</span>
<span class="t" style="left:292.8px;top:456px;font:400 14.4px/1 'Liberation Sans', sans-serif;color:#d4d4d4;letter-spacing:0.29px;-webkit-text-stroke:0.2px;">LL Road Frame - Red, 52</span>
<span class="t" style="left:508.4px;top:456px;font:400 14.4px/1 'Liberation Sans', sans-serif;color:#d4d4d4;letter-spacing:0.52px;-webkit-text-stroke:0.2px;">FR-R38R-52</span>
<span class="t" style="left:724.8px;top:456px;font:400 14.4px/1 'Liberation Sans', sans-serif;color:#d4d4d4;letter-spacing:0.22px;-webkit-text-stroke:0.2px;">Red</span>
<span class="t" style="left:940.8px;top:456px;font:400 14.4px/1 'Liberation Sans', sans-serif;color:#d4d4d4;letter-spacing:-0.57px;-webkit-text-stroke:0.2px;">187.1571</span>
<span class="t" style="left:1156.8px;top:456px;font:400 14.4px/1 'Liberation Sans', sans-serif;color:#d4d4d4;letter-spacing:0.29px;-webkit-text-stroke:0.2px;">337.22</span>
<span class="t" style="left:1372.8px;top:456px;font:400 14.4px/1 'Liberation Sans', sans-serif;color:#d4d4d4;letter-spacing:0.9px;-webkit-text-stroke:0.2px;">52</span>
<svg class="b" style="left:9px;top:484.6px" width="17" height="19" viewBox="0 0 17 19"><rect x=".5" y="1.800" width="16.200" height="1.500" rx=".5" fill="#c8c8c8"/><rect x="4.300" y=".300" width="8.600" height="2.200" rx=".9" fill="#c8c8c8"/><path d="M1.600 3.700h14l-.45 12.300a1.800 1.800 0 0 1-1.800 1.700H3.850a1.800 1.800 0 0 1-1.800-1.700z" fill="#c8c8c8"/><rect x="6.250" y="5.400" width="1.600" height="9.200" fill="#1f1f1f"/><rect x="10.250" y="5.400" width="1.600" height="9.200" fill="#1f1f1f"/></svg>
<svg class="b" style="left:42.2px;top:488.5px" width="22.600" height="10" viewBox="0 0 22 10" preserveAspectRatio="none"><path d="M1 1v8h8L5.800 5.800A9 9 0 0 1 19.300 9.200l1.700-.9A11 11 0 0 0 4.400 4.400z" fill="#4b5051"/></svg>
<span class="t" style="left:76.8px;top:488px;font:400 14.4px/1 'Liberation Sans', sans-serif;color:#d4d4d4;letter-spacing:0.9px;-webkit-text-stroke:0.2px;">728</span>
<span class="t" style="left:292.8px;top:488px;font:400 14.4px/1 'Liberation Sans', sans-serif;color:#d4d4d4;letter-spacing:0.29px;-webkit-text-stroke:0.2px;">LL Road Frame - Red, 58</span>
<span class="t" style="left:508.4px;top:488px;font:400 14.4px/1 'Liberation Sans', sans-serif;color:#d4d4d4;letter-spacing:0.52px;-webkit-text-stroke:0.2px;">FR-R38R-58</span>
<span class="t" style="left:724.8px;top:488px;font:400 14.4px/1 'Liberation Sans', sans-serif;color:#d4d4d4;letter-spacing:0.22px;-webkit-text-stroke:0.2px;">Red</span>
<span class="t" style="left:940.8px;top:488px;font:400 14.4px/1 'Liberation Sans', sans-serif;color:#d4d4d4;letter-spacing:-0.57px;-webkit-text-stroke:0.2px;">187.1571</span>
<span class="t" style="left:1156.8px;top:488px;font:400 14.4px/1 'Liberation Sans', sans-serif;color:#d4d4d4;letter-spacing:0.29px;-webkit-text-stroke:0.2px;">337.22</span>
<span class="t" style="left:1372.8px;top:488px;font:400 14.4px/1 'Liberation Sans', sans-serif;color:#d4d4d4;letter-spacing:0.9px;-webkit-text-stroke:0.2px;">58</span>
<svg class="b" style="left:9px;top:515.8px" width="17" height="19" viewBox="0 0 17 19"><rect x=".5" y="1.800" width="16.200" height="1.500" rx=".5" fill="#c8c8c8"/><rect x="4.300" y=".300" width="8.600" height="2.200" rx=".9" fill="#c8c8c8"/><path d="M1.600 3.700h14l-.45 12.300a1.800 1.800 0 0 1-1.800 1.700H3.850a1.800 1.800 0 0 1-1.800-1.700z" fill="#c8c8c8"/><rect x="6.250" y="5.400" width="1.600" height="9.200" fill="#1f1f1f"/><rect x="10.250" y="5.400" width="1.600" height="9.200" fill="#1f1f1f"/></svg>
<svg class="b" style="left:42.2px;top:519.7px" width="22.600" height="10" viewBox="0 0 22 10" preserveAspectRatio="none"><path d="M1 1v8h8L5.800 5.800A9 9 0 0 1 19.300 9.200l1.700-.9A11 11 0 0 0 4.400 4.400z" fill="#4b5051"/></svg>
<span class="t" style="left:76.8px;top:519px;font:400 14.4px/1 'Liberation Sans', sans-serif;color:#d4d4d4;letter-spacing:0.9px;-webkit-text-stroke:0.2px;">729</span>
<span class="t" style="left:292.8px;top:519px;font:400 14.4px/1 'Liberation Sans', sans-serif;color:#d4d4d4;letter-spacing:0.29px;-webkit-text-stroke:0.2px;">LL Road Frame - Red, 60</span>
<span class="t" style="left:508.4px;top:519px;font:400 14.4px/1 'Liberation Sans', sans-serif;color:#d4d4d4;letter-spacing:0.52px;-webkit-text-stroke:0.2px;">FR-R38R-60</span>
<span class="t" style="left:724.8px;top:519px;font:400 14.4px/1 'Liberation Sans', sans-serif;color:#d4d4d4;letter-spacing:0.22px;-webkit-text-stroke:0.2px;">Red</span>
<span class="t" style="left:940.8px;top:519px;font:400 14.4px/1 'Liberation Sans', sans-serif;color:#d4d4d4;letter-spacing:-0.57px;-webkit-text-stroke:0.2px;">187.1571</span>
<span class="t" style="left:1156.8px;top:519px;font:400 14.4px/1 'Liberation Sans', sans-serif;color:#d4d4d4;letter-spacing:0.29px;-webkit-text-stroke:0.2px;">337.22</span>
<span class="t" style="left:1372.8px;top:519px;font:400 14.4px/1 'Liberation Sans', sans-serif;color:#d4d4d4;letter-spacing:0.9px;-webkit-text-stroke:0.2px;">60</span>
<svg class="b" style="left:9px;top:547.0px" width="17" height="19" viewBox="0 0 17 19"><rect x=".5" y="1.800" width="16.200" height="1.500" rx=".5" fill="#c8c8c8"/><rect x="4.300" y=".300" width="8.600" height="2.200" rx=".9" fill="#c8c8c8"/><path d="M1.600 3.700h14l-.45 12.300a1.800 1.800 0 0 1-1.800 1.700H3.850a1.800 1.800 0 0 1-1.800-1.700z" fill="#c8c8c8"/><rect x="6.250" y="5.400" width="1.600" height="9.200" fill="#1f1f1f"/><rect x="10.250" y="5.400" width="1.600" height="9.200" fill="#1f1f1f"/></svg>
<svg class="b" style="left:42.2px;top:550.9px" width="22.600" height="10" viewBox="0 0 22 10" preserveAspectRatio="none"><path d="M1 1v8h8L5.800 5.800A9 9 0 0 1 19.300 9.200l1.700-.9A11 11 0 0 0 4.400 4.400z" fill="#4b5051"/></svg>
<span class="t" style="left:76.8px;top:550px;font:400 14.4px/1 'Liberation Sans', sans-serif;color:#d4d4d4;letter-spacing:0.64px;-webkit-text-stroke:0.2px;">730</span>
<span class="t" style="left:292.8px;top:550px;font:400 14.4px/1 'Liberation Sans', sans-serif;color:#d4d4d4;letter-spacing:0.29px;-webkit-text-stroke:0.2px;">LL Road Frame - Red, 62</span>
<span class="t" style="left:508.4px;top:550px;font:400 14.4px/1 'Liberation Sans', sans-serif;color:#d4d4d4;letter-spacing:0.52px;-webkit-text-stroke:0.2px;">FR-R38R-62</span>
<span class="t" style="left:724.8px;top:550px;font:400 14.4px/1 'Liberation Sans', sans-serif;color:#d4d4d4;letter-spacing:0.22px;-webkit-text-stroke:0.2px;">Red</span>
<span class="t" style="left:940.8px;top:550px;font:400 14.4px/1 'Liberation Sans', sans-serif;color:#d4d4d4;letter-spacing:-0.57px;-webkit-text-stroke:0.2px;">187.1571</span>
<span class="t" style="left:1156.8px;top:550px;font:400 14.4px/1 'Liberation Sans', sans-serif;color:#d4d4d4;letter-spacing:0.29px;-webkit-text-stroke:0.2px;">337.22</span>
<span class="t" style="left:1372.8px;top:550px;font:400 14.4px/1 'Liberation Sans', sans-serif;color:#d4d4d4;letter-spacing:0.9px;-webkit-text-stroke:0.2px;">62</span>
<div class="b" style="left:281px;top:67px;width:228px;height:40px;border:3px solid #f0280a;"></div>
<div class="b" style="left:288px;top:73px;width:216px;height:30px;background:#2a5a9c;border-top:1px solid #6f8fb5;border-right:1px solid #7f96ad;"></div>
<div class="b" style="left:290px;top:75px;width:207px;height:26px;background:#212121;border-radius:4px;"></div>
<span class="t" style="left:293.2px;top:80px;font:400 15.6px/1 'Liberation Sans', sans-serif;color:#e4e4e4;letter-spacing:0.15px;-webkit-text-stroke:0.2px;">HL Road Frame - Black, 58</span>
<div class="b" style="left:486px;top:79px;width:1px;height:17px;background:#e4e4e4;"></div>
</div>
<div class="b" style="left:58px;top:694px;width:1589px;height:3px;background:#434a4c;"></div>
<span class="t" style="left:68px;top:708.00px;font:700 15.6px/1 'Liberation Sans', sans-serif;color:#ccc;letter-spacing:0.1px;">Definition</span>
<div class="b" style="left:65px;top:731px;width:79px;height:3px;background:#0078d4;border-radius:1.5px;"></div>
<svg class="b" style="left:1410px;top:709px;" width="13" height="13" viewBox="0 0 13 13" fill="none"><path d="M5.300 2.300H3.800a2 2 0 0 0-2 2v4.900a2 2 0 0 0 2 2h4.900a2 2 0 0 0 2-2V7.700M7 1.500h4.500V6M11.300 1.700L6.300 6.700" stroke="#ccc" stroke-width="1.200"/></svg>
<span class="t" style="left:1433.4px;top:709.00px;font:400 14.4px/1 'Liberation Sans', sans-serif;color:#ccc;letter-spacing:0.28px;-webkit-text-stroke:0.2px;">Open in Editor</span>
<svg class="b" style="left:1551px;top:707px;" width="16" height="17" viewBox="0 0 16 17" fill="none"><rect x="4.500" y="1.300" width="9.300" height="11.700" rx="2" stroke="#ccc" stroke-width="1.200"/><path d="M2 4v8.500a3 3 0 0 0 3 3h6" stroke="#ccc" stroke-width="1.200"/></svg>
<svg class="b" style="left:1584px;top:710px;" width="13" height="10" viewBox="0 0 13 10" fill="none"><path d="M1.800 7.800l4.700-4.700 4.700 4.700" stroke="#ccc" stroke-width="1.900"/></svg>
<svg class="b" style="left:1617px;top:709px;" width="12" height="12" viewBox="0 0 12 12" fill="none"><path d="M1.300 1.300l9.400 9.400M10.700 1.300l-9.400 9.400" stroke="#ccc" stroke-width="1.300"/></svg>
<div class="b" style="left:132px;top:735px;width:1379px;height:22px;border-top:1px solid #2c2c2c;border-bottom:1px solid #2c2c2c;border-left:1px solid #2c2c2c;"></div>
<span class="t" style="left:80px;width:21.500px;text-align:right;top:738.00px;font:400 14.4px/1 'DejaVu Sans Mono', 'Liberation Mono', monospace;color:#cccccc;">1</span>
<span class="t" style="left:132.300px;top:738.00px;font:400 14.4px/1 'DejaVu Sans Mono', 'Liberation Mono', monospace;-webkit-text-stroke:0.25px;"><span style="color:#f014f0">UPDATE</span><span style="color:#cccccc"> </span><span style="color:#ffd700">[</span><span style="color:#cccccc">SalesLT</span><span style="color:#ffd700">]</span><span style="color:#cccccc">.</span><span style="color:#ffd700">[</span><span style="color:#cccccc">Product</span><span style="color:#ffd700">]</span><span style="color:#cccccc"> </span><span style="color:#569cd6">SET</span><span style="color:#cccccc"> </span><span style="color:#ffd700">[</span><span style="color:#cccccc">Name</span><span style="color:#ffd700">]</span><span style="color:#cccccc"> </span><span style="color:#7d94aa">=</span><span style="color:#cccccc"> </span><span style="color:#ff0a0a">N&#x27;AWC Logo Caps&#x27;</span><span style="color:#cccccc"> </span><span style="color:#569cd6">WHERE</span><span style="color:#cccccc"> </span><span style="color:#ffd700">(</span><span style="color:#da70d6">[</span><span style="color:#cccccc">ProductID</span><span style="color:#da70d6">]</span><span style="color:#cccccc"> </span><span style="color:#7d94aa">=</span><span style="color:#cccccc"> </span><span style="color:#b5cea8">712</span><span style="color:#ffd700">)</span></span>
<span class="t" style="left:80px;width:21.500px;text-align:right;top:759.00px;font:400 14.4px/1 'DejaVu Sans Mono', 'Liberation Mono', monospace;color:#858585;">2</span>
<span class="t" style="left:132.300px;top:759.00px;font:400 14.4px/1 'DejaVu Sans Mono', 'Liberation Mono', monospace;-webkit-text-stroke:0.25px;"><span style="color:#f014f0">UPDATE</span><span style="color:#cccccc"> </span><span style="color:#ffd700">[</span><span style="color:#cccccc">SalesLT</span><span style="color:#ffd700">]</span><span style="color:#cccccc">.</span><span style="color:#ffd700">[</span><span style="color:#cccccc">Product</span><span style="color:#ffd700">]</span><span style="color:#cccccc"> </span><span style="color:#569cd6">SET</span><span style="color:#cccccc"> </span><span style="color:#ffd700">[</span><span style="color:#cccccc">Color</span><span style="color:#ffd700">]</span><span style="color:#cccccc"> </span><span style="color:#7d94aa">=</span><span style="color:#cccccc"> </span><span style="color:#ff0a0a">N&#x27;Blue&#x27;</span><span style="color:#cccccc"> </span><span style="color:#569cd6">WHERE</span><span style="color:#cccccc"> </span><span style="color:#ffd700">(</span><span style="color:#da70d6">[</span><span style="color:#cccccc">ProductID</span><span style="color:#da70d6">]</span><span style="color:#cccccc"> </span><span style="color:#7d94aa">=</span><span style="color:#cccccc"> </span><span style="color:#b5cea8">714</span><span style="color:#ffd700">)</span></span>
<span class="t" style="left:80px;width:21.500px;text-align:right;top:781.00px;font:400 14.4px/1 'DejaVu Sans Mono', 'Liberation Mono', monospace;color:#858585;">3</span>
<span class="t" style="left:132.300px;top:781.00px;font:400 14.4px/1 'DejaVu Sans Mono', 'Liberation Mono', monospace;-webkit-text-stroke:0.25px;"><span style="color:#f014f0">UPDATE</span><span style="color:#cccccc"> </span><span style="color:#ffd700">[</span><span style="color:#cccccc">SalesLT</span><span style="color:#ffd700">]</span><span style="color:#cccccc">.</span><span style="color:#ffd700">[</span><span style="color:#cccccc">Product</span><span style="color:#ffd700">]</span><span style="color:#cccccc"> </span><span style="color:#569cd6">SET</span><span style="color:#cccccc"> </span><span style="color:#ffd700">[</span><span style="color:#cccccc">Color</span><span style="color:#ffd700">]</span><span style="color:#cccccc"> </span><span style="color:#7d94aa">=</span><span style="color:#cccccc"> </span><span style="color:#ff0a0a">N&#x27;Black&#x27;</span><span style="color:#cccccc"> </span><span style="color:#569cd6">WHERE</span><span style="color:#cccccc"> </span><span style="color:#ffd700">(</span><span style="color:#da70d6">[</span><span style="color:#cccccc">ProductID</span><span style="color:#da70d6">]</span><span style="color:#cccccc"> </span><span style="color:#7d94aa">=</span><span style="color:#cccccc"> </span><span style="color:#b5cea8">720</span><span style="color:#ffd700">)</span></span>
<span class="t" style="left:80px;width:21.500px;text-align:right;top:802.00px;font:400 14.4px/1 'DejaVu Sans Mono', 'Liberation Mono', monospace;color:#858585;">4</span>
<span class="t" style="left:132.300px;top:802.00px;font:400 14.4px/1 'DejaVu Sans Mono', 'Liberation Mono', monospace;-webkit-text-stroke:0.25px;"><span style="color:#f014f0">UPDATE</span><span style="color:#cccccc"> </span><span style="color:#ffd700">[</span><span style="color:#cccccc">SalesLT</span><span style="color:#ffd700">]</span><span style="color:#cccccc">.</span><span style="color:#ffd700">[</span><span style="color:#cccccc">Product</span><span style="color:#ffd700">]</span><span style="color:#cccccc"> </span><span style="color:#569cd6">SET</span><span style="color:#cccccc"> </span><span style="color:#ffd700">[</span><span style="color:#cccccc">Name</span><span style="color:#ffd700">]</span><span style="color:#cccccc"> </span><span style="color:#7d94aa">=</span><span style="color:#cccccc"> </span><span style="color:#ff0a0a">N&#x27;LL Road Frame – Red, 444&#x27;</span><span style="color:#cccccc"> </span><span style="color:#569cd6">WHERE</span><span style="color:#cccccc"> </span><span style="color:#ffd700">(</span><span style="color:#da70d6">[</span><span style="color:#cccccc">ProductID</span><span style="color:#da70d6">]</span><span style="color:#cccccc"> </span><span style="color:#7d94aa">=</span><span style="color:#cccccc"> </span><span style="color:#b5cea8">725</span><span style="color:#ffd700">)</span></span>
<span class="t" style="left:80px;width:21.500px;text-align:right;top:824.00px;font:400 14.4px/1 'DejaVu Sans Mono', 'Liberation Mono', monospace;color:#858585;">5</span>
<span class="t" style="left:132.300px;top:824.00px;font:400 14.4px/1 'DejaVu Sans Mono', 'Liberation Mono', monospace;-webkit-text-stroke:0.25px;"><span style="color:#f014f0">UPDATE</span><span style="color:#cccccc"> </span><span style="color:#ffd700">[</span><span style="color:#cccccc">SalesLT</span><span style="color:#ffd700">]</span><span style="color:#cccccc">.</span><span style="color:#ffd700">[</span><span style="color:#cccccc">Product</span><span style="color:#ffd700">]</span><span style="color:#cccccc"> </span><span style="color:#569cd6">SET</span><span style="color:#cccccc"> </span><span style="color:#ffd700">[</span><span style="color:#cccccc">Color</span><span style="color:#ffd700">]</span><span style="color:#cccccc"> </span><span style="color:#7d94aa">=</span><span style="color:#cccccc"> </span><span style="color:#ff0a0a">N&#x27;Black&#x27;</span><span style="color:#cccccc"> </span><span style="color:#569cd6">WHERE</span><span style="color:#cccccc"> </span><span style="color:#ffd700">(</span><span style="color:#da70d6">[</span><span style="color:#cccccc">ProductID</span><span style="color:#da70d6">]</span><span style="color:#cccccc"> </span><span style="color:#7d94aa">=</span><span style="color:#cccccc"> </span><span style="color:#b5cea8">732</span><span style="color:#ffd700">)</span></span>
<svg class="b" style="left:1519px;top:735px;" width="100" height="12" viewBox="0 0 100 12" fill="none"><rect x="0.0" y="0.60" width="6.0" height="1.500" fill="#f014f0" opacity="0.7"/><rect x="7.0" y="0.60" width="1.0" height="1.500" fill="#ffd700" opacity="0.38"/><rect x="8.0" y="0.60" width="7.0" height="1.500" fill="#cccccc" opacity="0.38"/><rect x="14.9" y="0.60" width="1.0" height="1.500" fill="#ffd700" opacity="0.38"/><rect x="15.9" y="0.60" width="1.0" height="1.500" fill="#cccccc" opacity="0.38"/><rect x="16.9" y="0.60" width="1.0" height="1.500" fill="#ffd700" opacity="0.38"/><rect x="17.9" y="0.60" width="7.0" height="1.500" fill="#cccccc" opacity="0.38"/><rect x="24.9" y="0.60" width="1.0" height="1.500" fill="#ffd700" opacity="0.38"/><rect x="26.9" y="0.60" width="3.0" height="1.500" fill="#569cd6" opacity="0.7"/><rect x="30.8" y="0.60" width="1.0" height="1.500" fill="#ffd700" opacity="0.38"/><rect x="31.8" y="0.60" width="4.0" height="1.500" fill="#cccccc" opacity="0.38"/><rect x="35.8" y="0.60" width="1.0" height="1.500" fill="#ffd700" opacity="0.38"/><rect x="37.8" y="0.60" width="1.0" height="1.500" fill="#7d94aa" opacity="0.38"/><rect x="39.8" y="0.60" width="15.9" height="1.500" fill="#ff0a0a" opacity="0.7"/><rect x="56.7" y="0.60" width="5.0" height="1.500" fill="#569cd6" opacity="0.7"/><rect x="62.7" y="0.60" width="1.0" height="1.500" fill="#ffd700" opacity="0.38"/><rect x="63.7" y="0.60" width="1.0" height="1.500" fill="#da70d6" opacity="0.38"/><rect x="64.7" y="0.60" width="9.0" height="1.500" fill="#cccccc" opacity="0.38"/><rect x="73.6" y="0.60" width="1.0" height="1.500" fill="#da70d6" opacity="0.38"/><rect x="75.6" y="0.60" width="1.0" height="1.500" fill="#7d94aa" opacity="0.38"/><rect x="77.6" y="0.60" width="3.0" height="1.500" fill="#b5cea8" opacity="0.38"/><rect x="80.6" y="0.60" width="1.0" height="1.500" fill="#ffd700" opacity="0.38"/><rect x="0.0" y="2.55" width="6.0" height="1.500" fill="#f014f0" opacity="0.7"/><rect x="7.0" y="2.55" width="1.0" height="1.500" fill="#ffd700" opacity="0.38"/><rect x="8.0" y="2.55" width="7.0" height="1.500" fill="#cccccc" opacity="0.38"/><rect x="14.9" y="2.55" width="1.0" height="1.500" fill="#ffd700" opacity="0.38"/><rect x="15.9" y="2.55" width="1.0" height="1.500" fill="#cccccc" opacity="0.38"/><rect x="16.9" y="2.55" width="1.0" height="1.500" fill="#ffd700" opacity="0.38"/><rect x="17.9" y="2.55" width="7.0" height="1.500" fill="#cccccc" opacity="0.38"/><rect x="24.9" y="2.55" width="1.0" height="1.500" fill="#ffd700" opacity="0.38"/><rect x="26.9" y="2.55" width="3.0" height="1.500" fill="#569cd6" opacity="0.7"/><rect x="30.8" y="2.55" width="1.0" height="1.500" fill="#ffd700" opacity="0.38"/><rect x="31.8" y="2.55" width="5.0" height="1.500" fill="#cccccc" opacity="0.38"/><rect x="36.8" y="2.55" width="1.0" height="1.500" fill="#ffd700" opacity="0.38"/><rect x="38.8" y="2.55" width="1.0" height="1.500" fill="#7d94aa" opacity="0.38"/><rect x="40.8" y="2.55" width="7.0" height="1.500" fill="#ff0a0a" opacity="0.7"/><rect x="48.8" y="2.55" width="5.0" height="1.500" fill="#569cd6" opacity="0.7"/><rect x="54.7" y="2.55" width="1.0" height="1.500" fill="#ffd700" opacity="0.38"/><rect x="55.7" y="2.55" width="1.0" height="1.500" fill="#da70d6" opacity="0.38"/><rect x="56.7" y="2.55" width="9.0" height="1.500" fill="#cccccc" opacity="0.38"/><rect x="65.7" y="2.55" width="1.0" height="1.500" fill="#da70d6" opacity="0.38"/><rect x="67.7" y="2.55" width="1.0" height="1.500" fill="#7d94aa" opacity="0.38"/><rect x="69.6" y="2.55" width="3.0" height="1.500" fill="#b5cea8" opacity="0.38"/><rect x="72.6" y="2.55" width="1.0" height="1.500" fill="#ffd700" opacity="0.38"/><rect x="0.0" y="4.50" width="6.0" height="1.500" fill="#f014f0" opacity="0.7"/><rect x="7.0" y="4.50" width="1.0" height="1.500" fill="#ffd700" opacity="0.38"/><rect x="8.0" y="4.50" width="7.0" height="1.500" fill="#cccccc" opacity="0.38"/><rect x="14.9" y="4.50" width="1.0" height="1.500" fill="#ffd700" opacity="0.38"/><rect x="15.9" y="4.50" width="1.0" height="1.500" fill="#cccccc" opacity="0.38"/><rect x="16.9" y="4.50" width="1.0" height="1.500" fill="#ffd700" opacity="0.38"/><rect x="17.9" y="4.50" width="7.0" height="1.500" fill="#cccccc" opacity="0.38"/><rect x="24.9" y="4.50" width="1.0" height="1.500" fill="#ffd700" opacity="0.38"/><rect x="26.9" y="4.50" width="3.0" height="1.500" fill="#569cd6" opacity="0.7"/><rect x="30.8" y="4.50" width="1.0" height="1.500" fill="#ffd700" opacity="0.38"/><rect x="31.8" y="4.50" width="5.0" height="1.500" fill="#cccccc" opacity="0.38"/><rect x="36.8" y="4.50" width="1.0" height="1.500" fill="#ffd700" opacity="0.38"/><rect x="38.8" y="4.50" width="1.0" height="1.500" fill="#7d94aa" opacity="0.38"/><rect x="40.8" y="4.50" width="8.0" height="1.500" fill="#ff0a0a" opacity="0.7"/><rect x="49.7" y="4.50" width="5.0" height="1.500" fill="#569cd6" opacity="0.7"/><rect x="55.7" y="4.50" width="1.0" height="1.500" fill="#ffd700" opacity="0.38"/><rect x="56.7" y="4.50" width="1.0" height="1.500" fill="#da70d6" opacity="0.38"/><rect x="57.7" y="4.50" width="9.0" height="1.500" fill="#cccccc" opacity="0.38"/><rect x="66.7" y="4.50" width="1.0" height="1.500" fill="#da70d6" opacity="0.38"/><rect x="68.7" y="4.50" width="1.0" height="1.500" fill="#7d94aa" opacity="0.38"/><rect x="70.6" y="4.50" width="3.0" height="1.500" fill="#b5cea8" opacity="0.38"/><rect x="73.6" y="4.50" width="1.0" height="1.500" fill="#ffd700" opacity="0.38"/><rect x="0.0" y="6.45" width="6.0" height="1.500" fill="#f014f0" opacity="0.7"/><rect x="7.0" y="6.45" width="1.0" height="1.500" fill="#ffd700" opacity="0.38"/><rect x="8.0" y="6.45" width="7.0" height="1.500" fill="#cccccc" opacity="0.38"/><rect x="14.9" y="6.45" width="1.0" height="1.500" fill="#ffd700" opacity="0.38"/><rect x="15.9" y="6.45" width="1.0" height="1.500" fill="#cccccc" opacity="0.38"/><rect x="16.9" y="6.45" width="1.0" height="1.500" fill="#ffd700" opacity="0.38"/><rect x="17.9" y="6.45" width="7.0" height="1.500" fill="#cccccc" opacity="0.38"/><rect x="24.9" y="6.45" width="1.0" height="1.500" fill="#ffd700" opacity="0.38"/><rect x="26.9" y="6.45" width="3.0" height="1.500" fill="#569cd6" opacity="0.7"/><rect x="30.8" y="6.45" width="1.0" height="1.500" fill="#ffd700" opacity="0.38"/><rect x="31.8" y="6.45" width="4.0" height="1.500" fill="#cccccc" opacity="0.38"/><rect x="35.8" y="6.45" width="1.0" height="1.500" fill="#ffd700" opacity="0.38"/><rect x="37.8" y="6.45" width="1.0" height="1.500" fill="#7d94aa" opacity="0.38"/><rect x="39.8" y="6.45" width="26.9" height="1.500" fill="#ff0a0a" opacity="0.7"/><rect x="67.7" y="6.45" width="5.0" height="1.500" fill="#569cd6" opacity="0.7"/><rect x="73.6" y="6.45" width="1.0" height="1.500" fill="#ffd700" opacity="0.38"/><rect x="74.6" y="6.45" width="1.0" height="1.500" fill="#da70d6" opacity="0.38"/><rect x="75.6" y="6.45" width="9.0" height="1.500" fill="#cccccc" opacity="0.38"/><rect x="84.6" y="6.45" width="1.0" height="1.500" fill="#da70d6" opacity="0.38"/><rect x="86.6" y="6.45" width="1.0" height="1.500" fill="#7d94aa" opacity="0.38"/><rect x="88.6" y="6.45" width="3.0" height="1.500" fill="#b5cea8" opacity="0.38"/><rect x="91.5" y="6.45" width="1.0" height="1.500" fill="#ffd700" opacity="0.38"/><rect x="0.0" y="8.40" width="6.0" height="1.500" fill="#f014f0" opacity="0.7"/><rect x="7.0" y="8.40" width="1.0" height="1.500" fill="#ffd700" opacity="0.38"/><rect x="8.0" y="8.40" width="7.0" height="1.500" fill="#cccccc" opacity="0.38"/><rect x="14.9" y="8.40" width="1.0" height="1.500" fill="#ffd700" opacity="0.38"/><rect x="15.9" y="8.40" width="1.0" height="1.500" fill="#cccccc" opacity="0.38"/><rect x="16.9" y="8.40" width="1.0" height="1.500" fill="#ffd700" opacity="0.38"/><rect x="17.9" y="8.40" width="7.0" height="1.500" fill="#cccccc" opacity="0.38"/><rect x="24.9" y="8.40" width="1.0" height="1.500" fill="#ffd700" opacity="0.38"/><rect x="26.9" y="8.40" width="3.0" height="1.500" fill="#569cd6" opacity="0.7"/><rect x="30.8" y="8.40" width="1.0" height="1.500" fill="#ffd700" opacity="0.38"/><rect x="31.8" y="8.40" width="5.0" height="1.500" fill="#cccccc" opacity="0.38"/><rect x="36.8" y="8.40" width="1.0" height="1.500" fill="#ffd700" opacity="0.38"/><rect x="38.8" y="8.40" width="1.0" height="1.500" fill="#7d94aa" opacity="0.38"/><rect x="40.8" y="8.40" width="8.0" height="1.500" fill="#ff0a0a" opacity="0.7"/><rect x="49.7" y="8.40" width="5.0" height="1.500" fill="#569cd6" opacity="0.7"/><rect x="55.7" y="8.40" width="1.0" height="1.500" fill="#ffd700" opacity="0.38"/><rect x="56.7" y="8.40" width="1.0" height="1.500" fill="#da70d6" opacity="0.38"/><rect x="57.7" y="8.40" width="9.0" height="1.500" fill="#cccccc" opacity="0.38"/><rect x="66.7" y="8.40" width="1.0" height="1.500" fill="#da70d6" opacity="0.38"/><rect x="68.7" y="8.40" width="1.0" height="1.500" fill="#7d94aa" opacity="0.38"/><rect x="70.6" y="8.40" width="3.0" height="1.500" fill="#b5cea8" opacity="0.38"/><rect x="73.6" y="8.40" width="1.0" height="1.500" fill="#ffd700" opacity="0.38"/></svg>
<div class="b" style="left:1631px;top:737px;width:1px;height:162px;background:#3a3a3a;"></div>
<div class="b" style="left:1631px;top:735px;width:16px;height:2px;background:#a9a9a9;"></div>
<svg class="b" style="left:14px;top:905px;" width="16" height="17" viewBox="0 0 16 17" fill="none"><path d="M2.300 8.300l5 4-5 4.200" stroke="#ccc" stroke-width="1.200"/><path d="M13.300 2.200l-5 4.200 5 4" stroke="#ccc" stroke-width="1.200"/></svg>
<svg class="b" style="left:51px;top:903px;" width="20" height="20" viewBox="0 0 20 20" fill="none"><circle cx="5" cy="4.200" r="2.300" stroke="#ccc" stroke-width="1.200"/><circle cx="5" cy="16" r="2.300" stroke="#ccc" stroke-width="1.200"/><path d="M5 6.500v7.200" stroke="#ccc" stroke-width="1.200"/><path d="M5 11.500c0-2 1.500-2.500 3.500-2.800" stroke="#ccc" stroke-width="1.200"/><rect x="9.800" y="5" width="6" height="5" rx="2.500" stroke="#ccc" stroke-width="1.200"/><circle cx="13.300" cy="13.700" r="5" fill="#ccc"/><path d="M13.300 10.800v5.800M10.800 12.300l5 2.900M15.800 12.300l-5 2.900" stroke="#1f1f1f" stroke-width="1.100"/></svg>
<span class="t" style="left:74.2px;top:906.00px;font:400 14.4px/1 'Liberation Sans', sans-serif;color:#ccc;letter-spacing:0.81px;-webkit-text-stroke:0.2px;">croblesm-0305-vscode*</span>
<svg class="b" style="left:249px;top:903px;" width="19" height="21" viewBox="0 0 19 21" fill="none"><path d="M6 15.800A6.600 6.600 0 0 1 10.400 3.700M8.200 2l2.200 1.700-2 2.200" stroke="#ccc" stroke-width="1.200" stroke-linejoin="round"/><path d="M12.700 4.400A6.600 6.600 0 0 1 8.300 16.700M10.700 14.500l-2.400 2.200 2.400 2" stroke="#ccc" stroke-width="1.200" stroke-linejoin="round"/></svg>
<svg class="b" style="left:287px;top:904px;" width="19" height="19" viewBox="0 0 19 19" fill="none"><circle cx="9.700" cy="9.200" r="7.800" stroke="#ccc" stroke-width="1.200"/><path d="M6.500 6l6.400 6.400M12.900 6l-6.400 6.400" stroke="#ccc" stroke-width="1.200"/></svg>
<span class="t" style="left:310.6px;top:906.00px;font:400 14.4px/1 'Liberation Sans', sans-serif;color:#ccc;-webkit-text-stroke:0.2px;">0</span>
<svg class="b" style="left:323px;top:904px;" width="20" height="19" viewBox="0 0 20 19" fill="none"><path d="M10.300 2L18.600 17H2z" stroke="#ccc" stroke-width="1.200" stroke-linejoin="round"/><path d="M10.300 7.300v5.200M10.300 13.800v1.700" stroke="#ccc" stroke-width="1.200"/></svg>
<span class="t" style="left:347.2px;top:906.00px;font:400 14.4px/1 'Liberation Sans', sans-serif;color:#ccc;-webkit-text-stroke:0.2px;">0</span>
<div class="b" style="left:379.5px;top:907.7px;width:10.5px;height:10.5px;background:#0a7ce0;border-radius:50%;"></div>
<span class="t" style="left:398.7px;top:906.00px;font:400 14.4px/1 'Liberation Sans', sans-serif;color:#ccc;letter-spacing:0.45px;-webkit-text-stroke:0.2px;">Update is ready, click to restart.</span>
<div class="b" style="left:1529px;top:901px;width:38px;height:25px;background:#3a3d41;"></div>
<svg class="b" style="left:1538px;top:903px;" width="20" height="20" viewBox="0 0 20 20" fill="none"><circle cx="8.300" cy="8.600" r="6.300" stroke="#ccc" stroke-width="1.200"/><path d="M12.800 13.200l4.500 4.500M8.300 5.700v5.800M5.400 8.600h5.800" stroke="#ccc" stroke-width="1.200"/></svg>
<svg class="b" style="left:1575px;top:903px;" width="24" height="21" viewBox="0 0 24 21" fill="none"><path d="M12 3.500c1.300-1.600 4.300-1.800 5.600-.3 1 1.100 1.100 3.100.6 4.700 1.200.8 2.900 2.300 2.900 3.600v2.600c-1.700 2.400-5.400 4.300-9.100 4.300s-7.400-1.900-9.100-4.300v-2.600c0-1.300 1.700-2.800 2.900-3.600-.5-1.600-.4-3.600.6-4.700C7.700 1.700 10.700 1.900 12 3.500z" fill="#ccc"/><path d="M6.900 4.600c.8-.9 2.500-.8 3.300 0 .7.800.7 2.400.2 3.200-.7 1-2.400 1.100-3.500.7-.8-.5-.9-2.900 0-3.900zM17.100 4.600c-.8-.9-2.500-.8-3.300 0-.7.800-.7 2.400-.2 3.200.7 1 2.400 1.100 3.500.7.800-.5.900-2.900 0-3.900z" fill="#1f1f1f"/><rect x="8.600" y="11.300" width="1.800" height="3.700" rx=".9" fill="#1f1f1f"/><rect x="13.600" y="11.300" width="1.800" height="3.700" rx=".9" fill="#1f1f1f"/></svg>
<svg class="b" style="left:1615px;top:903px;" width="20" height="21" viewBox="0 0 20 21" fill="none"><path d="M10 2.500c-3.200 0-5.300 2.500-5.300 5.500v5L3 15.500h14L15.300 13V8c0-3-2.100-5.500-5.300-5.500z" stroke="#ccc" stroke-width="1.200" stroke-linejoin="round"/><path d="M8 15.700a2 2.200 0 0 0 4 0" stroke="#ccc" stroke-width="1.200"/></svg>
</div></body></html>
